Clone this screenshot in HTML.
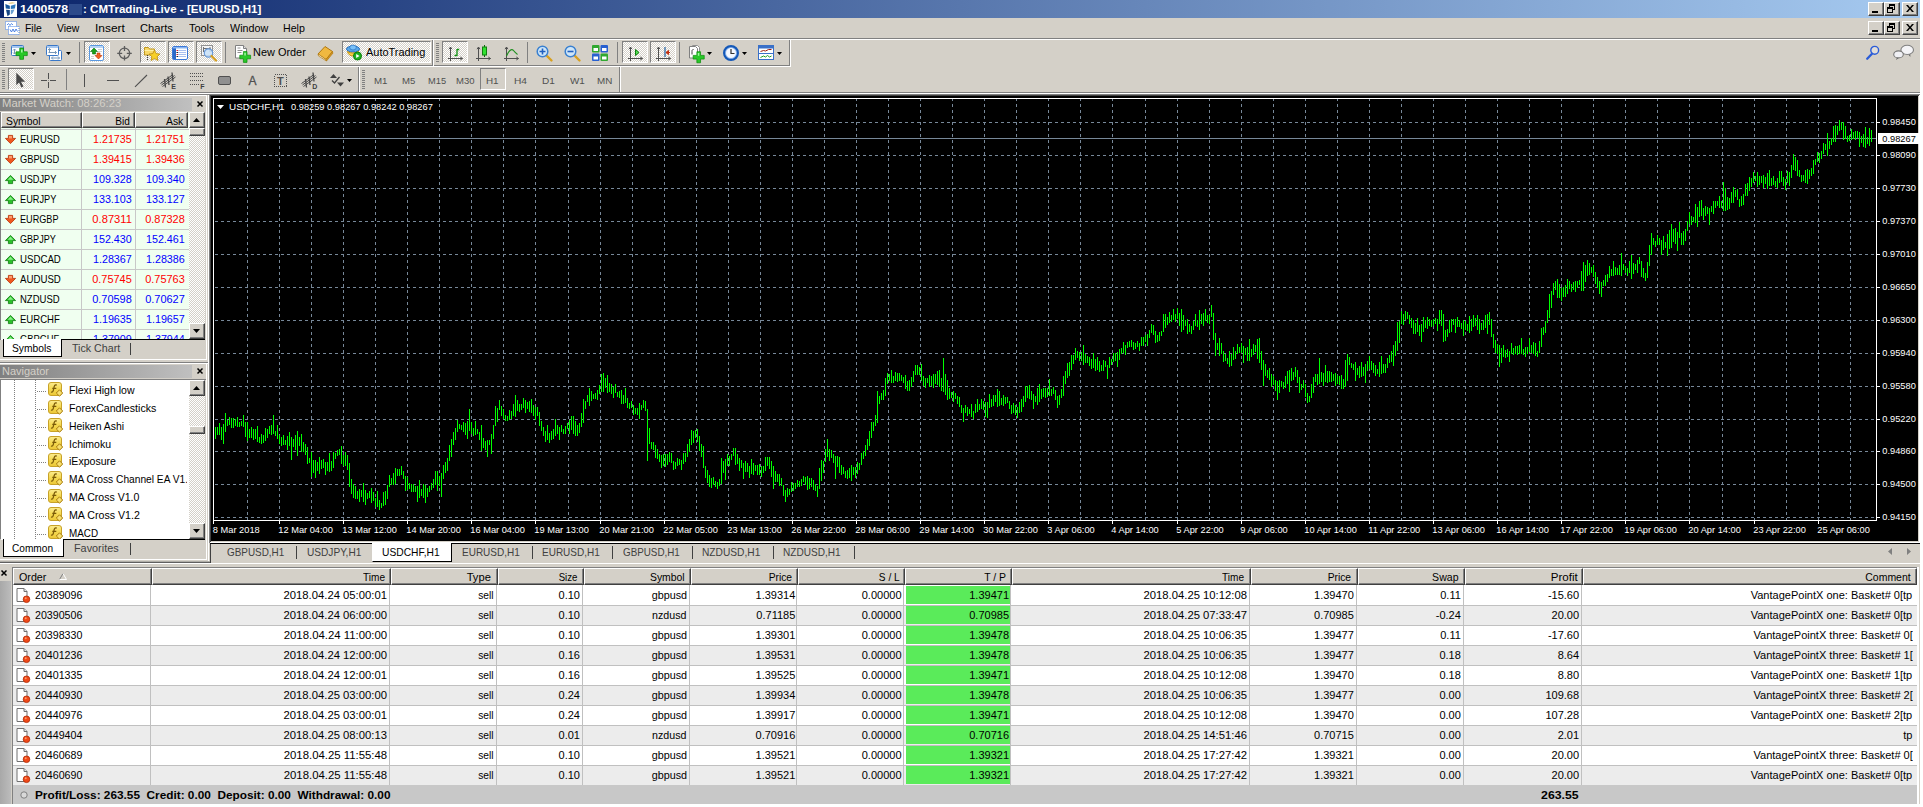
<!DOCTYPE html>
<html><head><meta charset="utf-8"><title>1400578 : CMTrading-Live - [EURUSD,H1]</title>
<style>
html,body{margin:0;padding:0;background:#fff;}
body{width:1923px;height:807px;overflow:hidden;position:relative;font-family:"Liberation Sans",sans-serif;font-size:11px;color:#000;}
#app{position:absolute;left:0;top:0;width:1920px;height:804px;background:#d4d0c8;overflow:hidden;}
#app div,#app span,#app svg{position:absolute;}
.t{white-space:pre;line-height:14px;height:14px;font-size:11px;}
.b{font-weight:bold;}
.s{white-space:pre;line-height:14px;height:14px;font-size:9.8px;}
.w{color:#fff;}
.g{color:#505050;}
.ic{overflow:visible;}
</style></head><body><div id="app">

<div style="left:0px;top:0px;width:1920px;height:18px;background:linear-gradient(90deg,#0a246a 0%,#a6caf0 100%);"></div>
<svg class="ic" style="left:4px;top:1px" width="13" height="16" viewBox="0 0 13 16"><rect x="0" y="0" width="13" height="16" fill="#fff"/><path d="M4 2.300Q8 0.800 11.500 2Q8 2.800 4 2.300z" fill="#d8a830"/><path d="M1.300 3l4.500 1.700v3.300l-4-0.600z" fill="#16569c"/><path d="M6.800 4.700l4.800-1.500-0.700 4.300-4.100 0.500z" fill="#2e78bc"/><path d="M2 8.800l3.800 0.300v4.500l-2.300 1.600z" fill="#144484"/><path d="M6.800 9.100l3.700-0.500-1.800 3.600-1.900 1.300z" fill="#6a9ed0"/></svg>
<span class="t b w" style="left:20.3px;top:2px;transform:scaleX(1.1208);transform-origin:left center;">1400578</span>
<span class="t" style="left:69px;top:2px;background:#2c4a8a;width:13px;height:11px;top:4px;">     </span>
<span class="t b w" style="left:83px;top:2px;transform:scaleX(1.0495);transform-origin:left center;">: CMTrading-Live - [EURUSD,H1]</span>
<div style="left:1868px;top:2px;width:16px;height:14px;box-sizing:border-box;background:#d4d0c8;border:1px solid;border-color:#fff #404040 #404040 #fff;box-shadow:inset -1px -1px 0 #808080;"></div>
<div style="left:1872px;top:11px;width:6px;height:2px;background:#000;"></div>
<div style="left:1884px;top:2px;width:16px;height:14px;box-sizing:border-box;background:#d4d0c8;border:1px solid;border-color:#fff #404040 #404040 #fff;box-shadow:inset -1px -1px 0 #808080;"></div>
<svg class="ic" style="left:1887px;top:4px" width="10" height="10" viewBox="0 0 10 10" shape-rendering="crispEdges"><path d="M2 0h6v2H2zM2 2h1v2H2zM7 2h1v4H7zM6 5h1v1H6zM0 3h6v2H0zM0 5h1v4H0zM5 5h1v4H5zM0 8h6v1H0z" fill="#000"/></svg>
<div style="left:1902px;top:2px;width:16px;height:14px;box-sizing:border-box;background:#d4d0c8;border:1px solid;border-color:#fff #404040 #404040 #fff;box-shadow:inset -1px -1px 0 #808080;"></div>
<svg class="ic" style="left:1906px;top:5px" width="8" height="7" viewBox="0 0 8 7"><path d="M0 0h2l2 2.5L6 0h2L5 3.5 8 7H6L4 4.5 2 7H0l3-3.5z" fill="#000"/></svg>
<div style="left:1868px;top:21px;width:16px;height:14px;box-sizing:border-box;background:#d4d0c8;border:1px solid;border-color:#fff #404040 #404040 #fff;box-shadow:inset -1px -1px 0 #808080;"></div>
<div style="left:1872px;top:30px;width:6px;height:2px;background:#000;"></div>
<div style="left:1884px;top:21px;width:16px;height:14px;box-sizing:border-box;background:#d4d0c8;border:1px solid;border-color:#fff #404040 #404040 #fff;box-shadow:inset -1px -1px 0 #808080;"></div>
<svg class="ic" style="left:1887px;top:23px" width="10" height="10" viewBox="0 0 10 10" shape-rendering="crispEdges"><path d="M2 0h6v2H2zM2 2h1v2H2zM7 2h1v4H7zM6 5h1v1H6zM0 3h6v2H0zM0 5h1v4H0zM5 5h1v4H5zM0 8h6v1H0z" fill="#000"/></svg>
<div style="left:1902px;top:21px;width:16px;height:14px;box-sizing:border-box;background:#d4d0c8;border:1px solid;border-color:#fff #404040 #404040 #fff;box-shadow:inset -1px -1px 0 #808080;"></div>
<svg class="ic" style="left:1906px;top:24px" width="8" height="7" viewBox="0 0 8 7"><path d="M0 0h2l2 2.5L6 0h2L5 3.5 8 7H6L4 4.5 2 7H0l3-3.5z" fill="#000"/></svg>
<svg class="ic" style="left:5px;top:21px" width="15" height="15" viewBox="0 0 15 15"><rect x="0.5" y="0.5" width="11" height="8" fill="#fff" stroke="#4a84e8" stroke-dasharray="1 1"/><path d="M2 4l1.500-1.500 1.500 2 1.500-2 1.500 1.500" stroke="#4a84e8" fill="none" stroke-width="0.9"/><rect x="3.500" y="5.500" width="10.500" height="8" fill="#fff" stroke="#4a84e8" stroke-dasharray="1 1"/><path d="M5 8.500l1.500 2.500 1.500-3 1.500 3 1.500-3 1.500 2.500" stroke="#3a74e0" fill="none" stroke-width="0.9"/></svg>
<span class="t" style="left:24.7px;top:21px;transform:scaleX(0.9478);transform-origin:left center;">File</span>
<span class="t" style="left:57.3px;top:21px;transform:scaleX(0.9431);transform-origin:left center;">View</span>
<span class="t" style="left:95.3px;top:21px;transform:scaleX(1.0868);transform-origin:left center;">Insert</span>
<span class="t" style="left:140.3px;top:21px;transform:scaleX(1.0155);transform-origin:left center;">Charts</span>
<span class="t" style="left:188.5px;top:21px;transform:scaleX(0.9930);transform-origin:left center;">Tools</span>
<span class="t" style="left:229.8px;top:21px;transform:scaleX(0.9764);transform-origin:left center;">Window</span>
<span class="t" style="left:283.4px;top:21px;transform:scaleX(0.9680);transform-origin:left center;">Help</span>
<div style="left:0px;top:38px;width:1920px;height:1px;background:#808080;"></div>
<div style="left:0px;top:39px;width:1920px;height:1px;background:#fff;"></div>
<div style="left:0px;top:65px;width:790px;height:1px;background:#808080;"></div>
<div style="left:0px;top:66px;width:791px;height:1px;background:#fff;"></div>
<div style="left:432px;top:40px;width:1px;height:25px;background:#808080;"></div>
<div style="left:433px;top:40px;width:1px;height:26px;background:#fff;"></div>
<div style="left:789px;top:40px;width:1px;height:26px;background:#808080;"></div>
<div style="left:790px;top:40px;width:1px;height:27px;background:#fff;"></div>
<div style="left:2px;top:43px;width:3px;height:20px;background:repeating-linear-gradient(#808080 0 1px,transparent 1px 2px);"></div>
<svg class="ic" style="left:11px;top:44px" width="16" height="16" viewBox="0 0 16 16"><rect x="0.5" y="1.5" width="12" height="10" rx="1" fill="#fff" stroke="#3a78c8"/><path d="M1 2h11v2H1z" fill="#a8c8f0"/><path d="M3.5 5v5M2 6.5l1.5-1.5L5 6.5M2 8.5L3.5 10 5 8.5" stroke="#7898b8" fill="none"/><path d="M9 4h4v4h4v4h-4v4H9v-4H5V8h4z" fill="#28c828" stroke="#0c8c0c" stroke-width="0.8" transform="translate(0.3,0.3) scale(0.94)"/><path d="M10 5.5h1.6v3H10z" fill="#a0f8a0"/></svg>
<svg class="ic" style="left:31px;top:52px" width="5" height="3" viewBox="0 0 5 3"><path d="M0 0h5L2.5 3z" fill="#000"/></svg>
<svg class="ic" style="left:46px;top:45px" width="16" height="16" viewBox="0 0 16 16"><rect x="3.5" y="5.5" width="12" height="10" rx="1" fill="#fff" stroke="#3a78c8"/><rect x="0.5" y="0.5" width="12" height="10" rx="1" fill="#fff" stroke="#3a78c8"/><path d="M1 1h11v2H1z" fill="#a8c8f0"/><path d="M3.5 3.5v4.5M2.5 7.5h8M9 6l1.5 1.5L9 9M2 5l1.5-1.5L5 5" stroke="#7898b8" fill="none"/><path d="M5.5 13h8M7 11.5L5.500 13 7 14.500M12 11.500l1.500 1.500-1.500 1.500" stroke="#7898b8" fill="none"/></svg>
<svg class="ic" style="left:66px;top:52px" width="5" height="3" viewBox="0 0 5 3"><path d="M0 0h5L2.5 3z" fill="#000"/></svg>
<div style="left:79px;top:42px;width:1px;height:21px;background:#808080;"></div>
<div style="left:84px;top:41px;width:26px;height:22px;background:repeating-conic-gradient(#fff 0% 25%,#d4d0c8 0% 50%) 0 0/2px 2px;border:1px solid;border-color:#808080 #fff #fff #808080;box-sizing:border-box;"></div>
<svg class="ic" style="left:89px;top:45px" width="16" height="16" viewBox="0 0 16 16"><rect x="0.5" y="0.5" width="14" height="15" rx="1.5" fill="#fff" stroke="#5a98e0"/><path d="M1 1h13v2H1z" fill="#b8d4f4"/><path d="M5 3l3.5 3.500h-2V9h-3V6.500h-2z" fill="#18a018" stroke="#0a700a" stroke-width="0.6"/><path d="M9.500 14L6 10.500h2V8h3v2.500h2z" fill="#f06020" stroke="#c03000" stroke-width="0.6"/><path d="M9 4.500h4M9 6.500h4M2 11.500h3M2 13.500h3" stroke="#d0d0d0"/></svg>
<div style="left:140px;top:41px;width:26px;height:22px;background:repeating-conic-gradient(#fff 0% 25%,#d4d0c8 0% 50%) 0 0/2px 2px;border:1px solid;border-color:#808080 #fff #fff #808080;box-sizing:border-box;"></div>
<svg class="ic" style="left:144px;top:45px" width="16" height="16" viewBox="0 0 16 16"><path d="M0.500 2.500h4l1 1.500h5v6h-10z" fill="#f8d868" stroke="#c09820"/><path d="M0.500 5.500h10" stroke="#fff0a0"/><path d="M10.500 5l1.700 3.600 3.800 0.500-2.800 2.600 0.700 3.800-3.400-1.900-3.400 1.900 0.700-3.800L5 9.100l3.800-0.500z" fill="#f8d028" stroke="#b88a10" stroke-width="0.8"/><path d="M3.500 10v5" stroke="#404040" stroke-dasharray="1 1"/></svg>
<div style="left:168px;top:41px;width:26px;height:22px;background:repeating-conic-gradient(#fff 0% 25%,#d4d0c8 0% 50%) 0 0/2px 2px;border:1px solid;border-color:#808080 #fff #fff #808080;box-sizing:border-box;"></div>
<svg class="ic" style="left:172px;top:45px" width="16" height="16" viewBox="0 0 16 16"><rect x="0.500" y="1.500" width="15" height="13" rx="1.500" fill="#fff" stroke="#3a78d8"/><path d="M1 2h3v12H1z" fill="#2a68c8"/><path d="M1 2h14v1.500H1z" fill="#88b4f0"/><path d="M6 5.500h8M6 7.500h8M6 9.500h8M6 11.500h8" stroke="#a8c0f0"/><path d="M4.500 5h1.500v1H4.500zM4.500 9h1.500v1H4.500z" fill="#e02020"/><path d="M4.500 7h1.500v1H4.500zM4.500 11h1.500v1H4.500z" fill="#202020"/></svg>
<div style="left:196px;top:41px;width:26px;height:22px;background:repeating-conic-gradient(#fff 0% 25%,#d4d0c8 0% 50%) 0 0/2px 2px;border:1px solid;border-color:#808080 #fff #fff #808080;box-sizing:border-box;"></div>
<svg class="ic" style="left:201px;top:45px" width="16" height="16" viewBox="0 0 16 16"><rect x="0.500" y="0.500" width="11" height="10" fill="#f4f4f4" stroke="#909090"/><path d="M2.500 2v5M9 2v5M2.500 3.500h7" stroke="#707070"/><circle cx="7.500" cy="8" r="4.200" fill="#c8e0f8" fill-opacity="0.850" stroke="#6a9ad8" stroke-width="1.200"/><path d="M10.500 11l4.500 4.500" stroke="#d8a020" stroke-width="2.200" stroke-linecap="round"/></svg>
<svg class="ic" style="left:117px;top:45px" width="16" height="16" viewBox="0 0 16 16"><circle cx="7.5" cy="8.3" r="5.2" fill="none" stroke="#5c5c5c" stroke-width="1.300"/><path d="M7.5 1V6M7.5 10.600v5M0.200 8.300H5.200M9.800 8.300h5" stroke="#5c5c5c" stroke-width="1.300"/></svg>
<div style="left:225px;top:42px;width:1px;height:21px;background:#808080;"></div>
<svg class="ic" style="left:235px;top:44px" width="16" height="16" viewBox="0 0 16 16"><path d="M0.500 1.500h8l3 3v9.500h-11z" fill="#fff" stroke="#808080"/><path d="M8.500 1.500v3h3" fill="#e0e0e0" stroke="#808080"/><path d="M2.500 4h3M2.500 6.500h5M2.500 8.500h4" stroke="#909090"/><path d="M8 6h4v4h4v4h-4v4H8v-4H4v-4h4z" fill="#28c828" stroke="#0c8c0c" stroke-width="0.8" transform="translate(1.2,2.200) scale(0.9)"/><path d="M9.300 8.800h1.500v2.800H9.300z" fill="#a0f8a0"/></svg>
<span class="t" style="left:253px;top:45px;transform:scaleX(0.9928);transform-origin:left center;">New Order</span>
<svg class="ic" style="left:317px;top:45px" width="16" height="16" viewBox="0 0 16 16"><path d="M1 9L8 1.500l7.500 5L9 14.500z" fill="#f0b840" stroke="#b07810"/><path d="M1 9l0.500 2L9.500 16l-0.500-1.500z" fill="#fff8e0" stroke="#b07810" stroke-width="0.700"/><path d="M9 14.500l6.500-8 0.300 1.800L9.500 16z" fill="#d89820" stroke="#b07810" stroke-width="0.700"/></svg>
<div style="left:342px;top:41px;width:89px;height:22px;background:repeating-conic-gradient(#fff 0% 25%,#d4d0c8 0% 50%) 0 0/2px 2px;border:1px solid;border-color:#808080 #fff #fff #808080;box-sizing:border-box;"></div>
<svg class="ic" style="left:346px;top:44px" width="16" height="16" viewBox="0 0 16 16"><ellipse cx="7" cy="5" rx="6.500" ry="3" fill="#58a8e8" stroke="#2870c0"/><ellipse cx="7" cy="3.500" rx="3.300" ry="2.500" fill="#78c0f8" stroke="#2870c0" stroke-width="0.700"/><path d="M1.500 7.500c1 6 10 6 11 0c-3 2-8 2-11 0z" fill="#f8d048" stroke="#c09010"/><circle cx="11.500" cy="12" r="4" fill="#20b020" stroke="#0a800a"/><path d="M10.200 10l3.300 2-3.300 2z" fill="#fff"/></svg>
<span class="t" style="left:365.7px;top:45px;transform:scaleX(0.9963);transform-origin:left center;">AutoTrading</span>
<div style="left:436px;top:43px;width:3px;height:20px;background:repeating-linear-gradient(#808080 0 1px,transparent 1px 2px);"></div>
<div style="left:442px;top:41px;width:26px;height:22px;background:repeating-conic-gradient(#fff 0% 25%,#d4d0c8 0% 50%) 0 0/2px 2px;border:1px solid;border-color:#808080 #fff #fff #808080;box-sizing:border-box;"></div>
<svg class="ic" style="left:447px;top:45px" width="16" height="16" viewBox="0 0 16 16"><path d="M3.500 2v14M1 13.500h14.500M2 4.200l1.500-2.200 1.500 2.200M13.300 12l2.200 1.500-2.200 1.500" stroke="#505050" fill="none"/><path d="M10 4v7M10 4.500h2.200M7.500 10.500h2.500" stroke="#109010" stroke-width="1.300" fill="none"/></svg>
<svg class="ic" style="left:475px;top:45px" width="16" height="16" viewBox="0 0 16 16"><path d="M3.500 2v14M1 13.500h14.500M2 4.200l1.500-2.200 1.500 2.200M13.300 12l2.200 1.500-2.200 1.500" stroke="#505050" fill="none"/><path d="M9.500 0v12" stroke="#106010"/><rect x="7.500" y="2" width="4" height="8" fill="#30e030" stroke="#108010"/></svg>
<svg class="ic" style="left:503px;top:45px" width="16" height="16" viewBox="0 0 16 16"><path d="M3.500 2v14M1 13.500h14.500M2 4.200l1.500-2.200 1.500 2.200M13.300 12l2.200 1.500-2.200 1.500" stroke="#505050" fill="none"/><path d="M3.500 11c2-5 5-8 7-5.500s3 3 4 4" stroke="#209020" stroke-width="1.200" fill="none"/></svg>
<div style="left:527px;top:42px;width:1px;height:21px;background:#808080;"></div>
<svg class="ic" style="left:536px;top:45px" width="16" height="16" viewBox="0 0 16 16"><path d="M10.500 10.500l5 5" stroke="#d8a020" stroke-width="2.400" stroke-linecap="round"/><circle cx="6.500" cy="6.500" r="5.300" fill="#cfe6f8" stroke="#3a80d0" stroke-width="1.500"/><path d="M3.500 6.500h6M6.500 3.500v6" stroke="#2060c0" stroke-width="1.600"/></svg>
<svg class="ic" style="left:564px;top:45px" width="16" height="16" viewBox="0 0 16 16"><path d="M10.500 10.500l5 5" stroke="#d8a020" stroke-width="2.400" stroke-linecap="round"/><circle cx="6.500" cy="6.500" r="5.300" fill="#cfe6f8" stroke="#3a80d0" stroke-width="1.500"/><path d="M3.500 6.500h6" stroke="#2060c0" stroke-width="1.600"/></svg>
<svg class="ic" style="left:592px;top:45px" width="16" height="16" viewBox="0 0 16 16"><rect x="0" y="0" width="7.500" height="7.500" rx="1" fill="#30a830"/><rect x="8.500" y="0" width="7.500" height="7.500" rx="1" fill="#2860d0"/><rect x="0" y="8.500" width="7.500" height="7.500" rx="1" fill="#2860d0"/><rect x="8.500" y="8.500" width="7.500" height="7.500" rx="1" fill="#30a830"/><path d="M1.500 3h4.500v3H1.500zM10 3h4.500v3H10zM1.500 11.500h4.500v3H1.500zM10 11.500h4.500v3H10z" fill="#fff"/></svg>
<div style="left:617px;top:42px;width:1px;height:21px;background:#808080;"></div>
<div style="left:622px;top:41px;width:26px;height:22px;background:repeating-conic-gradient(#fff 0% 25%,#d4d0c8 0% 50%) 0 0/2px 2px;border:1px solid;border-color:#808080 #fff #fff #808080;box-sizing:border-box;"></div>
<svg class="ic" style="left:627px;top:45px" width="16" height="16" viewBox="0 0 16 16"><path d="M3.500 2v14M1 13.500h14.500M2 4.200l1.500-2.200 1.500 2.200M13.300 12l2.200 1.500-2.200 1.500" stroke="#505050" fill="none"/><path d="M8.500 4.500l3.500 3-3.500 3z" fill="#50e050" stroke="#108010"/></svg>
<div style="left:650px;top:41px;width:26px;height:22px;background:repeating-conic-gradient(#fff 0% 25%,#d4d0c8 0% 50%) 0 0/2px 2px;border:1px solid;border-color:#808080 #fff #fff #808080;box-sizing:border-box;"></div>
<svg class="ic" style="left:655px;top:45px" width="16" height="16" viewBox="0 0 16 16"><path d="M3.500 2v14M1 13.500h14.500M2 4.200l1.500-2.200 1.500 2.200M13.300 12l2.200 1.500-2.200 1.500" stroke="#505050" fill="none"/><path d="M10 2v10" stroke="#2060a0" stroke-width="1.200"/><path d="M15 7.500h-4M13.500 5.500l-2.500 2 2.500 2z" stroke="#c03010" stroke-width="1" fill="#e04010"/></svg>
<div style="left:679px;top:42px;width:1px;height:21px;background:#808080;"></div>
<svg class="ic" style="left:689px;top:44px" width="16" height="16" viewBox="0 0 16 16"><path d="M3.500 1.500h5l2 2v9h-7z" fill="#fff" stroke="#909090"/><path d="M0.500 2.500h6l2 2v9.500h-8z" fill="#fff" stroke="#808080"/><path d="M4.500 5.500c-1.500 0-1.500 1-1.500 2v3" stroke="#404040" fill="none"/><path d="M8 6h4v4h4v4h-4v4H8v-4H4v-4h4z" fill="#28c828" stroke="#0c8c0c" stroke-width="0.8" transform="translate(0.500,2.200) scale(0.92)"/><path d="M8.800 9h1.500v2.800H8.800z" fill="#a0f8a0"/></svg>
<svg class="ic" style="left:707px;top:52px" width="5" height="3" viewBox="0 0 5 3"><path d="M0 0h5L2.5 3z" fill="#000"/></svg>
<svg class="ic" style="left:723px;top:45px" width="16" height="16" viewBox="0 0 16 16"><circle cx="8" cy="8" r="6.800" fill="#f4f8ff" stroke="#1458b8" stroke-width="2.400"/><circle cx="8" cy="8" r="5.500" fill="none" stroke="#78a8e8" stroke-width="0.800"/><path d="M8 4v4.500h3.500" stroke="#303030" stroke-width="1.200" fill="none"/></svg>
<svg class="ic" style="left:742px;top:52px" width="5" height="3" viewBox="0 0 5 3"><path d="M0 0h5L2.5 3z" fill="#000"/></svg>
<svg class="ic" style="left:758px;top:45px" width="16" height="16" viewBox="0 0 16 16"><rect x="0.500" y="0.500" width="15" height="14" fill="#fff" stroke="#3a70c8"/><path d="M1 1h14v2.500H1z" fill="#3a70c8"/><path d="M1 8.500h14" stroke="#3a70c8"/><path d="M2.500 6.500l3-1 2 0.500 3-1.500h3" stroke="#a02010" fill="none"/><path d="M2.500 12.500l3-1.500 2 1 2-1.500 2 1.500 2-1" stroke="#20a020" fill="none"/></svg>
<svg class="ic" style="left:777px;top:52px" width="5" height="3" viewBox="0 0 5 3"><path d="M0 0h5L2.5 3z" fill="#000"/></svg>
<svg class="ic" style="left:1865px;top:45px" width="16" height="16" viewBox="0 0 16 16"><path d="M7 8.700l-4.800 5" stroke="#2a5cd8" stroke-width="2.300" stroke-linecap="round"/><circle cx="9.700" cy="5.300" r="3.900" fill="#e2ded8" stroke="#2a5cd8" stroke-width="1.400"/></svg>
<svg class="ic" style="left:1894px;top:44px" width="16" height="16" viewBox="0 0 16 16"><path d="M13.800 9.800l2.600 3.200-0.200-4z" fill="#606060"/><ellipse cx="13.200" cy="5.900" rx="6.300" ry="4.600" fill="#f4f4f7" stroke="#808080" stroke-width="1.100"/><path d="M3.200 13l-1.200 3 3.400-2.400z" fill="#606060"/><ellipse cx="4.500" cy="10.400" rx="4.800" ry="3.500" fill="#f0f0f4" stroke="#787878" stroke-width="1.100"/></svg>
<div style="left:358px;top:67px;width:1px;height:26px;background:#808080;"></div>
<div style="left:359px;top:67px;width:1px;height:26px;background:#fff;"></div>
<div style="left:619px;top:67px;width:1px;height:26px;background:#808080;"></div>
<div style="left:620px;top:67px;width:1px;height:26px;background:#fff;"></div>
<div style="left:2px;top:70px;width:3px;height:20px;background:repeating-linear-gradient(#808080 0 1px,transparent 1px 2px);"></div>
<div style="left:8px;top:68px;width:26px;height:22px;background:repeating-conic-gradient(#fff 0% 25%,#d4d0c8 0% 50%) 0 0/2px 2px;border:1px solid;border-color:#808080 #fff #fff #808080;box-sizing:border-box;"></div>
<svg class="ic" style="left:13px;top:72px" width="16" height="16" viewBox="0 0 16 16"><path d="M3.300 0.800v12.500l2.800-2.800 2.300 5 2-1-2.300-4.800h4z" fill="#484848"/></svg>
<svg class="ic" style="left:40px;top:72px" width="16" height="16" viewBox="0 0 16 16"><path d="M8.5 1v6M8.5 10v6M1 8.5h6M10 8.5h6" stroke="#505050" stroke-width="1" shape-rendering="crispEdges"/><path d="M8.5 8v1" stroke="#909090" shape-rendering="crispEdges"/></svg>
<div style="left:66px;top:69px;width:1px;height:21px;background:#808080;"></div>
<svg class="ic" style="left:77px;top:72px" width="16" height="16" viewBox="0 0 16 16"><path d="M7.500 2v13" stroke="#505050" stroke-width="1" shape-rendering="crispEdges"/></svg>
<svg class="ic" style="left:105px;top:72px" width="16" height="16" viewBox="0 0 16 16"><path d="M2 8.500h12" stroke="#505050" stroke-width="1" shape-rendering="crispEdges"/></svg>
<svg class="ic" style="left:133px;top:72px" width="16" height="16" viewBox="0 0 16 16"><path d="M2 14.800L14 3" stroke="#505050" stroke-width="1.100"/></svg>
<svg class="ic" style="left:160px;top:72px" width="16" height="16" viewBox="0 0 16 16"><path d="M0.500 11.500L13 2.500M2.500 14.500L15.500 5M1.500 13L14.500 3.500" stroke="#484848" stroke-width="1" fill="none"/><path d="M4.500 7l1 8.500M8 4.500l1 8.500M12 0.500l1 9" stroke="#484848" stroke-width="1.300" fill="none"/><text x="11.300" y="16.800" font-size="7" font-weight="bold" font-family="Liberation Sans, sans-serif" fill="#404040">E</text></svg>
<svg class="ic" style="left:189px;top:72px" width="16" height="16" viewBox="0 0 16 16"><path d="M1 1.500h13M1 4.500h13M1 8.500h13M1 12.500h10" stroke="#505050" stroke-dasharray="1 1" shape-rendering="crispEdges"/><text x="11.300" y="16.800" font-size="7" font-weight="bold" font-family="Liberation Sans, sans-serif" fill="#404040">F</text></svg>
<svg class="ic" style="left:217px;top:72px" width="16" height="16" viewBox="0 0 16 16"><rect x="1.500" y="4.500" width="12" height="8" rx="1.500" fill="#909090" stroke="#505050"/></svg>
<svg class="ic" style="left:245px;top:72px" width="16" height="16" viewBox="0 0 16 16"><text x="3.500" y="13" font-size="12" font-family="Liberation Sans, sans-serif" fill="#505050" stroke="#505050" stroke-width="0.300">A</text></svg>
<svg class="ic" style="left:273px;top:72px" width="16" height="16" viewBox="0 0 16 16"><rect x="1.500" y="2.500" width="12" height="12" fill="none" stroke="#505050" stroke-dasharray="1 1" shape-rendering="crispEdges"/><text x="4" y="13" font-size="11" font-weight="bold" font-family="Liberation Sans, sans-serif" fill="#505050">T</text></svg>
<svg class="ic" style="left:301px;top:72px" width="16" height="16" viewBox="0 0 16 16"><path d="M0.500 11.500L13 2.500M2.500 14.500L15.500 5M1.500 13L14.500 3.500" stroke="#484848" stroke-width="1" fill="none"/><path d="M4.500 7l1 8.500M8 4.500l1 8.500M12 0.500l1 9" stroke="#484848" stroke-width="1.300" fill="none"/><text x="11.300" y="16.800" font-size="7" font-weight="bold" font-family="Liberation Sans, sans-serif" fill="#404040">D</text></svg>
<svg class="ic" style="left:329px;top:72px" width="16" height="16" viewBox="0 0 16 16"><path d="M1 6l3.500-4 3.500 4z" fill="#404040"/><path d="M3 8.500l2.500 2.500 5-6" stroke="#404040" stroke-width="1.300" fill="none"/><path d="M8 10.500h7l-3.500 4z" fill="#404040"/></svg>
<svg class="ic" style="left:347px;top:79px" width="5" height="3" viewBox="0 0 5 3"><path d="M0 0h5L2.5 3z" fill="#000"/></svg>
<div style="left:362px;top:70px;width:3px;height:20px;background:repeating-linear-gradient(#808080 0 1px,transparent 1px 2px);"></div>
<span class="s g" style="left:373.5px;top:74.0px;transform:scaleX(0.9916);transform-origin:left center">M1</span>
<span class="s g" style="left:401.7px;top:74.0px;transform:scaleX(0.9769);transform-origin:left center">M5</span>
<span class="s g" style="left:427.7px;top:74.0px;transform:scaleX(0.9494);transform-origin:left center">M15</span>
<span class="s g" style="left:455.5px;top:74.0px;transform:scaleX(0.9704);transform-origin:left center">M30</span>
<div style="left:480px;top:68px;width:26px;height:22px;border:1px solid;border-color:#808080 #fff #fff #808080;box-sizing:border-box;"></div>
<span class="s g" style="left:486.4px;top:74.0px;transform:scaleX(1.0058);transform-origin:left center">H1</span>
<span class="s g" style="left:513.5px;top:74.0px;transform:scaleX(1.0377);transform-origin:left center">H4</span>
<span class="s g" style="left:542.2px;top:74.0px;transform:scaleX(1.0217);transform-origin:left center">D1</span>
<span class="s g" style="left:570.2px;top:74.0px;transform:scaleX(1.0068);transform-origin:left center">W1</span>
<span class="s g" style="left:596.7px;top:74.0px;transform:scaleX(1.0039);transform-origin:left center">MN</span>
<div style="left:0px;top:92px;width:1920px;height:1px;background:#808080;"></div>
<div style="left:0px;top:93px;width:1920px;height:1px;background:#fff;"></div>
<div style="left:0px;top:94px;width:1920px;height:1px;background:#808080;"></div>
<div style="left:0px;top:95px;width:207px;height:1px;background:#fff;"></div>
<div style="left:206px;top:95px;width:1px;height:265px;background:#fff;"></div>
<div style="left:0px;top:359px;width:207px;height:1px;background:#fff;"></div>
<div style="left:0px;top:362px;width:209px;height:1px;background:#808080;"></div>
<div style="left:0px;top:363px;width:209px;height:1px;background:#fff;"></div>
<div style="left:208px;top:95px;width:1px;height:468px;background:#fff;"></div>
<div style="left:0px;top:98px;width:192px;height:13px;background:linear-gradient(90deg,#808080,#c0c0c0);"></div>
<span class="t" style="left:2.2px;top:96px;transform:scaleX(1.0243);transform-origin:left center;color:#d4d0c8;">Market Watch: 08:26:23</span>
<svg class="ic" style="left:197px;top:101px" width="6" height="6" viewBox="0 0 6 6"><path d="M0.5 0.5l5 5M5.5 0.5l-5 5" stroke="#000" stroke-width="1.5"/></svg>
<div style="left:0px;top:112px;width:189px;height:228px;background:#f0fff0;overflow:hidden;"></div>
<div style="left:1px;top:112px;width:81px;height:16px;box-sizing:border-box;background:#d4d0c8;border:1px solid;border-color:#fff #404040 #404040 #fff;box-shadow:inset -1px -1px 0 #808080;"></div>
<div style="left:82px;top:112px;width:53px;height:16px;box-sizing:border-box;background:#d4d0c8;border:1px solid;border-color:#fff #404040 #404040 #fff;box-shadow:inset -1px -1px 0 #808080;"></div>
<div style="left:135px;top:112px;width:53px;height:16px;box-sizing:border-box;background:#d4d0c8;border:1px solid;border-color:#fff #404040 #404040 #fff;box-shadow:inset -1px -1px 0 #808080;"></div>
<span class="t" style="left:6px;top:114px;transform:scaleX(0.9405);transform-origin:left center;">Symbol</span>
<span class="t" style="right:1790px;top:114px;transform:scaleX(0.9183);transform-origin:right center;">Bid</span>
<span class="t" style="right:1736.8px;top:114px;transform:scaleX(0.9489);transform-origin:right center;">Ask</span>
<div style="left:0;top:0;width:1920px;height:804px;clip-path:inset(128px 1731px 465px 0px);">
<svg class="ic" style="left:5px;top:135px" width="11" height="9" viewBox="0 0 11 9"><path d="M5.500 8.600l5.100-5.200h-3v-3h-4.200v3h-3z" fill="#f05820" stroke="#b83004" stroke-width="0.800"/><path d="M4 1h3v2.400H4z" fill="#ffa070"/></svg>
<span class="t" style="left:20.3px;top:132px;transform:scaleX(0.8568);transform-origin:left center;">EURUSD</span>
<span class="t" style="right:1788.4px;top:132px;transform:scaleX(0.9758);transform-origin:right center;color:#ff0000;">1.21735</span>
<span class="t" style="right:1735.2px;top:132px;transform:scaleX(0.9758);transform-origin:right center;color:#ff0000;">1.21751</span>
<div style="left:0px;top:149px;width:189px;height:1px;background:#c8c8c8;"></div>
<svg class="ic" style="left:5px;top:155px" width="11" height="9" viewBox="0 0 11 9"><path d="M5.500 8.600l5.100-5.200h-3v-3h-4.200v3h-3z" fill="#f05820" stroke="#b83004" stroke-width="0.800"/><path d="M4 1h3v2.400H4z" fill="#ffa070"/></svg>
<span class="t" style="left:20.3px;top:152px;transform:scaleX(0.8438);transform-origin:left center;">GBPUSD</span>
<span class="t" style="right:1788.4px;top:152px;transform:scaleX(0.9758);transform-origin:right center;color:#ff0000;">1.39415</span>
<span class="t" style="right:1735.2px;top:152px;transform:scaleX(0.9758);transform-origin:right center;color:#ff0000;">1.39436</span>
<div style="left:0px;top:169px;width:189px;height:1px;background:#c8c8c8;"></div>
<svg class="ic" style="left:5px;top:175px" width="11" height="9" viewBox="0 0 11 9"><path d="M5.500 0.400l5.100 5.200h-3v3h-4.200v-3h-3z" fill="#2cc02c" stroke="#0c7c0c" stroke-width="0.800"/><path d="M5.500 1.800l2.800 2.900h-5.600z" fill="#8cf08c"/></svg>
<span class="t" style="left:20.3px;top:172px;transform:scaleX(0.8364);transform-origin:left center;">USDJPY</span>
<span class="t" style="right:1788.4px;top:172px;transform:scaleX(0.9758);transform-origin:right center;color:#0000ff;">109.328</span>
<span class="t" style="right:1735.2px;top:172px;transform:scaleX(0.9758);transform-origin:right center;color:#0000ff;">109.340</span>
<div style="left:0px;top:189px;width:189px;height:1px;background:#c8c8c8;"></div>
<svg class="ic" style="left:5px;top:195px" width="11" height="9" viewBox="0 0 11 9"><path d="M5.500 0.400l5.100 5.200h-3v3h-4.200v-3h-3z" fill="#2cc02c" stroke="#0c7c0c" stroke-width="0.800"/><path d="M5.500 1.800l2.800 2.900h-5.600z" fill="#8cf08c"/></svg>
<span class="t" style="left:20.3px;top:192px;transform:scaleX(0.8364);transform-origin:left center;">EURJPY</span>
<span class="t" style="right:1788.4px;top:192px;transform:scaleX(0.9758);transform-origin:right center;color:#0000ff;">133.103</span>
<span class="t" style="right:1735.2px;top:192px;transform:scaleX(0.9758);transform-origin:right center;color:#0000ff;">133.127</span>
<div style="left:0px;top:209px;width:189px;height:1px;background:#c8c8c8;"></div>
<svg class="ic" style="left:5px;top:215px" width="11" height="9" viewBox="0 0 11 9"><path d="M5.500 8.600l5.100-5.200h-3v-3h-4.200v3h-3z" fill="#f05820" stroke="#b83004" stroke-width="0.800"/><path d="M4 1h3v2.400H4z" fill="#ffa070"/></svg>
<span class="t" style="left:20.3px;top:212px;transform:scaleX(0.8287);transform-origin:left center;">EURGBP</span>
<span class="t" style="right:1788.4px;top:212px;transform:scaleX(1.0168);transform-origin:right center;color:#ff0000;">0.87311</span>
<span class="t" style="right:1735.2px;top:212px;transform:scaleX(0.9959);transform-origin:right center;color:#ff0000;">0.87328</span>
<div style="left:0px;top:229px;width:189px;height:1px;background:#c8c8c8;"></div>
<svg class="ic" style="left:5px;top:235px" width="11" height="9" viewBox="0 0 11 9"><path d="M5.500 0.400l5.100 5.200h-3v3h-4.200v-3h-3z" fill="#2cc02c" stroke="#0c7c0c" stroke-width="0.800"/><path d="M5.500 1.800l2.800 2.900h-5.600z" fill="#8cf08c"/></svg>
<span class="t" style="left:20.3px;top:232px;transform:scaleX(0.8248);transform-origin:left center;">GBPJPY</span>
<span class="t" style="right:1788.4px;top:232px;transform:scaleX(0.9758);transform-origin:right center;color:#0000ff;">152.430</span>
<span class="t" style="right:1735.2px;top:232px;transform:scaleX(0.9758);transform-origin:right center;color:#0000ff;">152.461</span>
<div style="left:0px;top:249px;width:189px;height:1px;background:#c8c8c8;"></div>
<svg class="ic" style="left:5px;top:255px" width="11" height="9" viewBox="0 0 11 9"><path d="M5.500 0.400l5.100 5.200h-3v3h-4.200v-3h-3z" fill="#2cc02c" stroke="#0c7c0c" stroke-width="0.800"/><path d="M5.500 1.800l2.800 2.900h-5.600z" fill="#8cf08c"/></svg>
<span class="t" style="left:20.3px;top:252px;transform:scaleX(0.8783);transform-origin:left center;">USDCAD</span>
<span class="t" style="right:1788.4px;top:252px;transform:scaleX(0.9758);transform-origin:right center;color:#0000ff;">1.28367</span>
<span class="t" style="right:1735.2px;top:252px;transform:scaleX(0.9758);transform-origin:right center;color:#0000ff;">1.28386</span>
<div style="left:0px;top:269px;width:189px;height:1px;background:#c8c8c8;"></div>
<svg class="ic" style="left:5px;top:275px" width="11" height="9" viewBox="0 0 11 9"><path d="M5.500 8.600l5.100-5.200h-3v-3h-4.200v3h-3z" fill="#f05820" stroke="#b83004" stroke-width="0.800"/><path d="M4 1h3v2.400H4z" fill="#ffa070"/></svg>
<span class="t" style="left:20.3px;top:272px;transform:scaleX(0.8783);transform-origin:left center;">AUDUSD</span>
<span class="t" style="right:1788.4px;top:272px;transform:scaleX(0.9959);transform-origin:right center;color:#ff0000;">0.75745</span>
<span class="t" style="right:1735.2px;top:272px;transform:scaleX(0.9959);transform-origin:right center;color:#ff0000;">0.75763</span>
<div style="left:0px;top:289px;width:189px;height:1px;background:#c8c8c8;"></div>
<svg class="ic" style="left:5px;top:295px" width="11" height="9" viewBox="0 0 11 9"><path d="M5.500 0.400l5.100 5.200h-3v3h-4.200v-3h-3z" fill="#2cc02c" stroke="#0c7c0c" stroke-width="0.800"/><path d="M5.500 1.800l2.800 2.900h-5.600z" fill="#8cf08c"/></svg>
<span class="t" style="left:20.3px;top:292px;transform:scaleX(0.8640);transform-origin:left center;">NZDUSD</span>
<span class="t" style="right:1788.4px;top:292px;transform:scaleX(0.9959);transform-origin:right center;color:#0000ff;">0.70598</span>
<span class="t" style="right:1735.2px;top:292px;transform:scaleX(0.9959);transform-origin:right center;color:#0000ff;">0.70627</span>
<div style="left:0px;top:309px;width:189px;height:1px;background:#c8c8c8;"></div>
<svg class="ic" style="left:5px;top:315px" width="11" height="9" viewBox="0 0 11 9"><path d="M5.500 0.400l5.100 5.200h-3v3h-4.200v-3h-3z" fill="#2cc02c" stroke="#0c7c0c" stroke-width="0.800"/><path d="M5.500 1.800l2.800 2.900h-5.600z" fill="#8cf08c"/></svg>
<span class="t" style="left:20.3px;top:312px;transform:scaleX(0.8684);transform-origin:left center;">EURCHF</span>
<span class="t" style="right:1788.4px;top:312px;transform:scaleX(0.9758);transform-origin:right center;color:#0000ff;">1.19635</span>
<span class="t" style="right:1735.2px;top:312px;transform:scaleX(0.9758);transform-origin:right center;color:#0000ff;">1.19657</span>
<div style="left:0px;top:329px;width:189px;height:1px;background:#c8c8c8;"></div>
<svg class="ic" style="left:5px;top:335px" width="11" height="9" viewBox="0 0 11 9"><path d="M5.500 0.400l5.100 5.200h-3v3h-4.200v-3h-3z" fill="#2cc02c" stroke="#0c7c0c" stroke-width="0.800"/><path d="M5.500 1.800l2.800 2.900h-5.600z" fill="#8cf08c"/></svg>
<span class="t" style="left:20.3px;top:332px;transform:scaleX(0.8552);transform-origin:left center;">GBPCHF</span>
<span class="t" style="right:1788.4px;top:332px;transform:scaleX(0.9758);transform-origin:right center;color:#0000ff;">1.37909</span>
<span class="t" style="right:1735.2px;top:332px;transform:scaleX(0.9758);transform-origin:right center;color:#0000ff;">1.37944</span>
<div style="left:0px;top:349px;width:189px;height:1px;background:#c8c8c8;"></div>
<div style="left:0px;top:129px;width:189px;height:1px;background:#c8c8c8;"></div>
<div style="left:81px;top:128px;width:1px;height:211px;background:#c8c8c8;"></div>
<div style="left:135px;top:128px;width:1px;height:211px;background:#c8c8c8;"></div>
</div>
<div style="left:0px;top:112px;width:1px;height:228px;background:#808080;"></div>
<div style="left:189px;top:112px;width:16px;height:227px;background:repeating-conic-gradient(#fff 0% 25%,#d4d0c8 0% 50%) 0 0/2px 2px;"></div>
<div style="left:189px;top:112px;width:16px;height:16px;box-sizing:border-box;background:#d4d0c8;border:1px solid;border-color:#fff #404040 #404040 #fff;box-shadow:inset -1px -1px 0 #808080;"></div>
<svg class="ic" style="left:193px;top:118px" width="7" height="4" viewBox="0 0 7 4"><path d="M0 4h7L3.5 0z" fill="#000"/></svg>
<div style="left:189px;top:323px;width:16px;height:16px;box-sizing:border-box;background:#d4d0c8;border:1px solid;border-color:#fff #404040 #404040 #fff;box-shadow:inset -1px -1px 0 #808080;"></div>
<svg class="ic" style="left:193px;top:329px" width="7" height="4" viewBox="0 0 7 4"><path d="M0 0h7L3.5 4z" fill="#000"/></svg>
<div style="left:189px;top:128px;width:16px;height:8px;box-sizing:border-box;background:#d4d0c8;border:1px solid;border-color:#fff #404040 #404040 #fff;box-shadow:inset -1px -1px 0 #808080;"></div>
<div style="left:62px;top:339px;width:143px;height:1px;background:#000;"></div>
<div style="left:1px;top:339px;width:61px;height:1px;background:#fff;"></div>
<div style="left:3px;top:339px;width:59px;height:18px;box-sizing:border-box;background:#fff;border:1px solid #000;border-top:none;"></div>
<span class="t" style="left:12.2px;top:341px;transform:scaleX(0.9317);transform-origin:left center;">Symbols</span>
<span class="t" style="left:72px;top:341px;transform:scaleX(0.9696);transform-origin:left center;color:#404040;">Tick Chart</span>
<div style="left:130px;top:343px;width:1px;height:12px;background:#404040;"></div>
<div style="left:206px;top:364px;width:1px;height:196px;background:#fff;"></div>
<div style="left:0px;top:559px;width:207px;height:1px;background:#fff;"></div>
<div style="left:0px;top:561px;width:210px;height:1px;background:#b0aea8;"></div>
<div style="left:0px;top:562px;width:210px;height:1px;background:#606060;"></div>
<div style="left:0px;top:379px;width:206px;height:1px;background:#808080;"></div>
<div style="left:0px;top:365px;width:192px;height:13px;background:linear-gradient(90deg,#808080,#c0c0c0);"></div>
<span class="t" style="left:2.2px;top:364px;transform:scaleX(0.9983);transform-origin:left center;color:#d4d0c8;">Navigator</span>
<svg class="ic" style="left:197px;top:368px" width="6" height="6" viewBox="0 0 6 6"><path d="M0.5 0.5l5 5M5.5 0.5l-5 5" stroke="#000" stroke-width="1.5"/></svg>
<div style="left:0px;top:380px;width:189px;height:159px;background:#fff;overflow:hidden;"></div>
<div style="left:0px;top:380px;width:1px;height:159px;background:#808080;"></div>
<div style="left:14px;top:380px;width:1px;height:159px;background:repeating-linear-gradient(#808080 0 1px,transparent 1px 2px);"></div>
<div style="left:35px;top:380px;width:1px;height:159px;background:repeating-linear-gradient(#808080 0 1px,transparent 1px 2px);"></div>
<div style="left:0;top:0;width:1920px;height:804px;clip-path:inset(380px 1733px 265px 0px);">
<div style="left:37px;top:391px;width:10px;height:1px;background:repeating-linear-gradient(90deg,#808080 0 1px,transparent 1px 2px);"></div>
<svg class="ic" style="left:48px;top:382px" width="15" height="15" viewBox="0 0 15 15"><defs><linearGradient id="gfx" x1="0" y1="0" x2="0" y2="1"><stop offset="0" stop-color="#fcec90"/><stop offset="0.5" stop-color="#f4d850"/><stop offset="1" stop-color="#ecc838"/></linearGradient></defs><rect x="0.500" y="0.500" width="13" height="13" rx="2.500" fill="url(#gfx)" stroke="#c8a228"/><path d="M8.800 3.200c-2.200-0.800-2.600 0.600-3.100 3.400s-0.900 3.800-2.700 3.400M4.300 6.300h4" stroke="#7a5a08" stroke-width="1.250" fill="none"/><path d="M11.500 7.800l3.200 3.200-3.200 3.200-3.200-3.200z" fill="#f8e070" stroke="#a87c10" stroke-width="1"/></svg>
<span class="t" style="left:69px;top:383px;transform:scaleX(0.9567);transform-origin:left center;">Flexi High low</span>
<div style="left:37px;top:409px;width:10px;height:1px;background:repeating-linear-gradient(90deg,#808080 0 1px,transparent 1px 2px);"></div>
<svg class="ic" style="left:48px;top:400px" width="15" height="15" viewBox="0 0 15 15"><defs><linearGradient id="gfx" x1="0" y1="0" x2="0" y2="1"><stop offset="0" stop-color="#fcec90"/><stop offset="0.5" stop-color="#f4d850"/><stop offset="1" stop-color="#ecc838"/></linearGradient></defs><rect x="0.500" y="0.500" width="13" height="13" rx="2.500" fill="url(#gfx)" stroke="#c8a228"/><path d="M8.800 3.200c-2.200-0.800-2.600 0.600-3.100 3.400s-0.900 3.800-2.700 3.400M4.300 6.300h4" stroke="#7a5a08" stroke-width="1.250" fill="none"/><path d="M11.500 7.800l3.200 3.200-3.200 3.200-3.200-3.200z" fill="#f8e070" stroke="#a87c10" stroke-width="1"/></svg>
<span class="t" style="left:69px;top:401px;transform:scaleX(0.9649);transform-origin:left center;">ForexCandlesticks</span>
<div style="left:37px;top:427px;width:10px;height:1px;background:repeating-linear-gradient(90deg,#808080 0 1px,transparent 1px 2px);"></div>
<svg class="ic" style="left:48px;top:418px" width="15" height="15" viewBox="0 0 15 15"><defs><linearGradient id="gfx" x1="0" y1="0" x2="0" y2="1"><stop offset="0" stop-color="#fcec90"/><stop offset="0.5" stop-color="#f4d850"/><stop offset="1" stop-color="#ecc838"/></linearGradient></defs><rect x="0.500" y="0.500" width="13" height="13" rx="2.500" fill="url(#gfx)" stroke="#c8a228"/><path d="M8.800 3.200c-2.200-0.800-2.600 0.600-3.100 3.400s-0.900 3.800-2.700 3.400M4.300 6.300h4" stroke="#7a5a08" stroke-width="1.250" fill="none"/><path d="M11.500 7.800l3.200 3.200-3.200 3.200-3.200-3.200z" fill="#f8e070" stroke="#a87c10" stroke-width="1"/></svg>
<span class="t" style="left:69px;top:419px;transform:scaleX(0.9468);transform-origin:left center;">Heiken Ashi</span>
<div style="left:37px;top:445px;width:10px;height:1px;background:repeating-linear-gradient(90deg,#808080 0 1px,transparent 1px 2px);"></div>
<svg class="ic" style="left:48px;top:436px" width="15" height="15" viewBox="0 0 15 15"><defs><linearGradient id="gfx" x1="0" y1="0" x2="0" y2="1"><stop offset="0" stop-color="#fcec90"/><stop offset="0.5" stop-color="#f4d850"/><stop offset="1" stop-color="#ecc838"/></linearGradient></defs><rect x="0.500" y="0.500" width="13" height="13" rx="2.500" fill="url(#gfx)" stroke="#c8a228"/><path d="M8.800 3.200c-2.200-0.800-2.600 0.600-3.100 3.400s-0.900 3.800-2.700 3.400M4.300 6.300h4" stroke="#7a5a08" stroke-width="1.250" fill="none"/><path d="M11.500 7.800l3.200 3.200-3.200 3.200-3.200-3.200z" fill="#f8e070" stroke="#a87c10" stroke-width="1"/></svg>
<span class="t" style="left:69px;top:437px;transform:scaleX(0.9542);transform-origin:left center;">Ichimoku</span>
<div style="left:37px;top:462px;width:10px;height:1px;background:repeating-linear-gradient(90deg,#808080 0 1px,transparent 1px 2px);"></div>
<svg class="ic" style="left:48px;top:453px" width="15" height="15" viewBox="0 0 15 15"><defs><linearGradient id="gfx" x1="0" y1="0" x2="0" y2="1"><stop offset="0" stop-color="#fcec90"/><stop offset="0.5" stop-color="#f4d850"/><stop offset="1" stop-color="#ecc838"/></linearGradient></defs><rect x="0.500" y="0.500" width="13" height="13" rx="2.500" fill="url(#gfx)" stroke="#c8a228"/><path d="M8.800 3.200c-2.200-0.800-2.600 0.600-3.100 3.400s-0.900 3.800-2.700 3.400M4.300 6.300h4" stroke="#7a5a08" stroke-width="1.250" fill="none"/><path d="M11.500 7.800l3.200 3.200-3.200 3.200-3.200-3.200z" fill="#f8e070" stroke="#a87c10" stroke-width="1"/></svg>
<span class="t" style="left:69px;top:454px;transform:scaleX(0.9608);transform-origin:left center;">iExposure</span>
<div style="left:37px;top:480px;width:10px;height:1px;background:repeating-linear-gradient(90deg,#808080 0 1px,transparent 1px 2px);"></div>
<svg class="ic" style="left:48px;top:471px" width="15" height="15" viewBox="0 0 15 15"><defs><linearGradient id="gfx" x1="0" y1="0" x2="0" y2="1"><stop offset="0" stop-color="#fcec90"/><stop offset="0.5" stop-color="#f4d850"/><stop offset="1" stop-color="#ecc838"/></linearGradient></defs><rect x="0.500" y="0.500" width="13" height="13" rx="2.500" fill="url(#gfx)" stroke="#c8a228"/><path d="M8.800 3.200c-2.200-0.800-2.600 0.600-3.100 3.400s-0.900 3.800-2.700 3.400M4.300 6.300h4" stroke="#7a5a08" stroke-width="1.250" fill="none"/><path d="M11.500 7.800l3.200 3.200-3.200 3.200-3.200-3.200z" fill="#f8e070" stroke="#a87c10" stroke-width="1"/></svg>
<span class="t" style="left:69px;top:472px;transform:scaleX(0.9268);transform-origin:left center;">MA Cross Channel EA V1.</span>
<div style="left:37px;top:498px;width:10px;height:1px;background:repeating-linear-gradient(90deg,#808080 0 1px,transparent 1px 2px);"></div>
<svg class="ic" style="left:48px;top:489px" width="15" height="15" viewBox="0 0 15 15"><defs><linearGradient id="gfx" x1="0" y1="0" x2="0" y2="1"><stop offset="0" stop-color="#fcec90"/><stop offset="0.5" stop-color="#f4d850"/><stop offset="1" stop-color="#ecc838"/></linearGradient></defs><rect x="0.500" y="0.500" width="13" height="13" rx="2.500" fill="url(#gfx)" stroke="#c8a228"/><path d="M8.800 3.200c-2.200-0.800-2.600 0.600-3.100 3.400s-0.900 3.800-2.700 3.400M4.300 6.300h4" stroke="#7a5a08" stroke-width="1.250" fill="none"/><path d="M11.500 7.800l3.200 3.200-3.200 3.200-3.200-3.200z" fill="#f8e070" stroke="#a87c10" stroke-width="1"/></svg>
<span class="t" style="left:69px;top:490px;transform:scaleX(0.9596);transform-origin:left center;">MA Cross V1.0</span>
<div style="left:37px;top:516px;width:10px;height:1px;background:repeating-linear-gradient(90deg,#808080 0 1px,transparent 1px 2px);"></div>
<svg class="ic" style="left:48px;top:507px" width="15" height="15" viewBox="0 0 15 15"><defs><linearGradient id="gfx" x1="0" y1="0" x2="0" y2="1"><stop offset="0" stop-color="#fcec90"/><stop offset="0.5" stop-color="#f4d850"/><stop offset="1" stop-color="#ecc838"/></linearGradient></defs><rect x="0.500" y="0.500" width="13" height="13" rx="2.500" fill="url(#gfx)" stroke="#c8a228"/><path d="M8.800 3.200c-2.200-0.800-2.600 0.600-3.100 3.400s-0.900 3.800-2.700 3.400M4.300 6.300h4" stroke="#7a5a08" stroke-width="1.250" fill="none"/><path d="M11.500 7.800l3.200 3.200-3.200 3.200-3.200-3.200z" fill="#f8e070" stroke="#a87c10" stroke-width="1"/></svg>
<span class="t" style="left:69px;top:508px;transform:scaleX(0.9665);transform-origin:left center;">MA Cross V1.2</span>
<div style="left:37px;top:534px;width:10px;height:1px;background:repeating-linear-gradient(90deg,#808080 0 1px,transparent 1px 2px);"></div>
<svg class="ic" style="left:48px;top:525px" width="15" height="15" viewBox="0 0 15 15"><defs><linearGradient id="gfx" x1="0" y1="0" x2="0" y2="1"><stop offset="0" stop-color="#fcec90"/><stop offset="0.5" stop-color="#f4d850"/><stop offset="1" stop-color="#ecc838"/></linearGradient></defs><rect x="0.500" y="0.500" width="13" height="13" rx="2.500" fill="url(#gfx)" stroke="#c8a228"/><path d="M8.800 3.200c-2.200-0.800-2.600 0.600-3.100 3.400s-0.900 3.800-2.700 3.400M4.300 6.300h4" stroke="#7a5a08" stroke-width="1.250" fill="none"/><path d="M11.500 7.800l3.200 3.200-3.200 3.200-3.200-3.200z" fill="#f8e070" stroke="#a87c10" stroke-width="1"/></svg>
<span class="t" style="left:69px;top:526px;transform:scaleX(0.8954);transform-origin:left center;">MACD</span>
</div>
<div style="left:189px;top:380px;width:16px;height:159px;background:repeating-conic-gradient(#fff 0% 25%,#d4d0c8 0% 50%) 0 0/2px 2px;"></div>
<div style="left:189px;top:380px;width:16px;height:16px;box-sizing:border-box;background:#d4d0c8;border:1px solid;border-color:#fff #404040 #404040 #fff;box-shadow:inset -1px -1px 0 #808080;"></div>
<svg class="ic" style="left:193px;top:386px" width="7" height="4" viewBox="0 0 7 4"><path d="M0 4h7L3.5 0z" fill="#000"/></svg>
<div style="left:189px;top:523px;width:16px;height:16px;box-sizing:border-box;background:#d4d0c8;border:1px solid;border-color:#fff #404040 #404040 #fff;box-shadow:inset -1px -1px 0 #808080;"></div>
<svg class="ic" style="left:193px;top:529px" width="7" height="4" viewBox="0 0 7 4"><path d="M0 0h7L3.5 4z" fill="#000"/></svg>
<div style="left:189px;top:426px;width:16px;height:8px;box-sizing:border-box;background:#d4d0c8;border:1px solid;border-color:#fff #404040 #404040 #fff;box-shadow:inset -1px -1px 0 #808080;"></div>
<div style="left:64px;top:539px;width:141px;height:1px;background:#000;"></div>
<div style="left:1px;top:539px;width:63px;height:1px;background:#fff;"></div>
<div style="left:3px;top:539px;width:61px;height:18px;box-sizing:border-box;background:#fff;border:1px solid #000;border-top:none;"></div>
<span class="t" style="left:12.2px;top:541px;transform:scaleX(0.9188);transform-origin:left center;">Common</span>
<span class="t" style="left:73.5px;top:541px;transform:scaleX(0.9859);transform-origin:left center;color:#404040;">Favorites</span>
<div style="left:130px;top:543px;width:1px;height:12px;background:#404040;"></div>
<div style="left:209px;top:94px;width:1px;height:449px;background:#808080;"></div>
<div style="left:210px;top:95px;width:1710px;height:1px;background:#404040;"></div>
<div style="left:210px;top:95px;width:1px;height:468px;background:#404040;"></div>
<div style="left:211px;top:96px;width:1707px;height:445px;background:#000;"></div>
<div style="left:211px;top:541px;width:1708px;height:1px;background:#d4d0c8;"></div>
<div style="left:1918px;top:96px;width:1px;height:446px;background:#d4d0c8;"></div>
<div style="left:210px;top:542px;width:1710px;height:1px;background:#fff;"></div>
<div style="left:1919px;top:95px;width:1px;height:448px;background:#fff;"></div>
<svg class="ic" style="left:0;top:0" width="1920" height="545" viewBox="0 0 1920 545" shape-rendering="crispEdges" font-family="Liberation Sans, sans-serif" font-size="9.8"><path d="M215 122.5H1875M215 155.5H1875M215 188.5H1875M215 221.5H1875M215 254.5H1875M215 287.5H1875M215 320.5H1875M215 353.5H1875M215 386.5H1875M215 419.5H1875M215 451.5H1875M215 484.5H1875M215 517.5H1875" stroke="#778899" stroke-dasharray="3 3" fill="none"/><path d="M247.5 98V520M279.5 98V520M311.5 98V520M343.5 98V520M375.5 98V520M407.5 98V520M439.5 98V520M471.5 98V520M503.5 98V520M535.5 98V520M568.5 98V520M600.5 98V520M632.5 98V520M664.5 98V520M696.5 98V520M728.5 98V520M760.5 98V520M792.5 98V520M824.5 98V520M856.5 98V520M888.5 98V520M920.5 98V520M952.5 98V520M984.5 98V520M1016.5 98V520M1048.5 98V520M1080.5 98V520M1112.5 98V520M1145.5 98V520M1177.5 98V520M1209.5 98V520M1241.5 98V520M1273.5 98V520M1305.5 98V520M1337.5 98V520M1369.5 98V520M1401.5 98V520M1433.5 98V520M1465.5 98V520M1497.5 98V520M1529.5 98V520M1561.5 98V520M1593.5 98V520M1625.5 98V520M1657.5 98V520M1689.5 98V520M1722.5 98V520M1754.5 98V520M1786.5 98V520M1818.5 98V520M1850.5 98V520" stroke="#778899" stroke-dasharray="3 3" fill="none"/><path d="M214 138.5H1876" stroke="#778899" fill="none"/><path d="M215.5 427V439M217.5 427V435M219.5 423V435M221.5 427V440M223.5 424V444M225.5 413V432M227.5 420V426M229.5 417V425M231.5 418V428M233.5 418V428M235.5 419V426M237.5 417V427M239.5 422V427M241.5 421V426M243.5 415V427M245.5 422V437M247.5 422V441M249.5 429V438M251.5 427V438M253.5 429V440M255.5 429V439M257.5 426V442M259.5 437V443M261.5 434V444M263.5 435V443M265.5 428V441M267.5 429V438M269.5 426V434M271.5 425V435M273.5 415V434M275.5 431V436M277.5 425V439M279.5 435V444M281.5 437V446M283.5 435V445M285.5 440V445M287.5 436V450M289.5 432V446M291.5 437V460M293.5 439V447M295.5 435V450M297.5 431V456M299.5 437V446M301.5 434V452M303.5 442V452M305.5 444V455M307.5 447V464M309.5 458V463M311.5 452V477M313.5 460V473M315.5 460V478M317.5 462V471M319.5 457V474M321.5 460V469M323.5 459V468M325.5 462V475M327.5 462V471M329.5 453V472M331.5 461V471M333.5 452V468M335.5 453V459M337.5 450V456M339.5 449V455M341.5 446V464M343.5 455V466M345.5 452V466M347.5 455V470M349.5 463V487M351.5 479V494M353.5 484V498M355.5 486V499M357.5 491V499M359.5 489V502M361.5 490V497M363.5 483V502M365.5 490V505M367.5 493V499M369.5 491V498M371.5 488V503M373.5 492V501M375.5 498V507M377.5 491V507M379.5 500V510M381.5 503V508M383.5 492V506M385.5 491V505M387.5 485V499M389.5 475V487M391.5 478V485M393.5 473V485M395.5 468V484M397.5 469V476M399.5 469V476M401.5 466V475M403.5 471V479M405.5 476V491M407.5 477V490M409.5 483V489M411.5 484V492M413.5 484V492M415.5 486V492M417.5 486V502M419.5 480V498M421.5 489V496M423.5 484V498M425.5 485V503M427.5 488V497M429.5 486V492M431.5 483V490M433.5 479V488M435.5 471V485M437.5 471V491M439.5 476V486M441.5 473V497M443.5 465V479M445.5 462V473M447.5 458V471M449.5 445V461M451.5 439V457M453.5 432V445M455.5 428V440M457.5 420V432M459.5 424V429M461.5 425V430M463.5 422V432M465.5 423V435M467.5 421V439M469.5 409V431M471.5 422V434M473.5 428V436M475.5 421V435M477.5 429V434M479.5 432V440M481.5 425V451M483.5 438V448M485.5 441V450M487.5 440V457M489.5 440V445M491.5 434V454M493.5 425V439M495.5 406V426M497.5 408V422M499.5 400V410M501.5 406V416M503.5 409V419M505.5 415V421M507.5 416V421M509.5 410V420M511.5 411V419M513.5 404V416M515.5 395V417M517.5 400V411M519.5 404V412M521.5 404V410M523.5 398V408M525.5 400V413M527.5 402V409M529.5 401V412M531.5 399V413M533.5 405V416M535.5 407V420M537.5 407V416M539.5 412V426M541.5 421V431M543.5 427V436M545.5 431V442M547.5 425V440M549.5 433V443M551.5 431V440M553.5 429V439M555.5 419V436M557.5 425V434M559.5 427V440M561.5 425V432M563.5 429V434M565.5 426V434M567.5 423V429M569.5 420V434M571.5 416V430M573.5 416V434M575.5 421V436M577.5 425V436M579.5 423V433M581.5 413V427M583.5 399V423M585.5 401V409M587.5 395V402M589.5 388V406M591.5 391V401M593.5 394V399M595.5 393V399M597.5 390V400M599.5 385V394M601.5 374V392M603.5 373V392M605.5 378V388M607.5 375V393M609.5 383V392M611.5 384V394M613.5 387V398M615.5 384V393M617.5 392V397M619.5 391V398M621.5 390V404M623.5 395V404M625.5 388V403M627.5 398V408M629.5 403V409M631.5 401V408M633.5 405V415M635.5 408V414M637.5 408V415M639.5 403V419M641.5 405V410M643.5 400V408M645.5 401V411M647.5 409V461M649.5 428V444M651.5 442V449M653.5 442V450M655.5 445V458M657.5 449V459M659.5 454V462M661.5 455V468M663.5 454V466M665.5 454V467M667.5 454V465M669.5 452V462M671.5 453V463M673.5 461V470M675.5 462V469M677.5 458V466M679.5 459V465M681.5 460V470M683.5 453V464M685.5 453V462M687.5 444V457M689.5 439V452M691.5 430V445M693.5 431V443M695.5 430V438M697.5 429V442M699.5 436V451M701.5 444V457M703.5 446V468M705.5 466V478M707.5 470V483M709.5 475V487M711.5 478V488M713.5 477V485M715.5 481V487M717.5 482V489M719.5 479V486M721.5 458V484M723.5 461V473M725.5 459V480M727.5 454V466M729.5 456V466M731.5 454V460M733.5 448V456M735.5 448V465M737.5 454V464M739.5 458V471M741.5 460V468M743.5 463V479M745.5 461V472M747.5 463V472M749.5 466V478M751.5 459V474M753.5 463V475M755.5 465V471M757.5 465V475M759.5 464V475M761.5 466V477M763.5 466V473M765.5 457V471M767.5 457V466M769.5 457V469M771.5 461V477M773.5 466V489M775.5 471V482M777.5 474V482M779.5 474V486M781.5 478V486M783.5 485V496M785.5 490V502M787.5 488V497M789.5 489V495M791.5 482V492M793.5 483V491M795.5 483V489M797.5 480V487M799.5 481V487M801.5 479V486M803.5 476V482M805.5 477V485M807.5 476V490M809.5 478V489M811.5 478V487M813.5 480V490M815.5 484V491M817.5 486V497M819.5 468V489M821.5 460V481M823.5 461V473M825.5 449V462M827.5 439V457M829.5 449V461M831.5 450V458M833.5 454V463M835.5 456V479M837.5 456V467M839.5 457V473M841.5 465V475M843.5 467V474M845.5 471V478M847.5 470V479M849.5 468V478M851.5 465V481M853.5 467V475M855.5 467V478M857.5 462V474M859.5 463V470M861.5 453V465M863.5 451V459M865.5 445V456M867.5 439V450M869.5 431V446M871.5 422V438M873.5 422V431M875.5 415V426M877.5 391V423M879.5 396V404M881.5 393V400M883.5 390V400M885.5 378V396M887.5 373V384M889.5 374V381M891.5 370V383M893.5 376V383M895.5 372V381M897.5 373V382M899.5 373V381M901.5 375V381M903.5 377V383M905.5 375V389M907.5 381V391M909.5 380V391M911.5 377V387M913.5 371V382M915.5 365V375M917.5 365V375M919.5 367V375M921.5 364V381M923.5 376V386M925.5 378V388M927.5 378V383M929.5 375V387M931.5 376V386M933.5 374V388M935.5 374V384M937.5 371V385M939.5 370V387M941.5 378V391M943.5 358V392M945.5 374V395M947.5 380V400M949.5 388V399M951.5 392V398M953.5 391V402M955.5 393V399M957.5 396V404M959.5 397V407M961.5 405V413M963.5 408V422M965.5 405V413M967.5 407V416M969.5 409V414M971.5 404V417M973.5 411V419M975.5 404V413M977.5 399V412M979.5 404V410M981.5 399V409M983.5 401V410M985.5 402V417M987.5 402V418M989.5 394V408M991.5 399V407M993.5 395V406M995.5 395V402M997.5 389V407M999.5 391V406M1001.5 398V405M1003.5 395V406M1005.5 397V404M1007.5 397V403M1009.5 401V409M1011.5 405V414M1013.5 403V413M1015.5 405V415M1017.5 407V418M1019.5 402V413M1021.5 399V412M1023.5 396V407M1025.5 386V402M1027.5 386V398M1029.5 385V399M1031.5 391V400M1033.5 394V409M1035.5 396V402M1037.5 388V405M1039.5 384V402M1041.5 389V399M1043.5 388V397M1045.5 388V398M1047.5 388V397M1049.5 379V396M1051.5 389V396M1053.5 387V394M1055.5 390V400M1057.5 396V408M1059.5 395V405M1061.5 389V398M1063.5 376V396M1065.5 371V384M1067.5 363V378M1069.5 362V376M1071.5 355V370M1073.5 355V364M1075.5 348V360M1077.5 351V358M1079.5 352V361M1081.5 352V361M1083.5 345V365M1085.5 354V363M1087.5 356V363M1089.5 357V366M1091.5 359V369M1093.5 353V368M1095.5 359V371M1097.5 357V370M1099.5 361V372M1101.5 365V371M1103.5 360V371M1105.5 361V367M1107.5 365V379M1109.5 357V368M1111.5 359V365M1113.5 353V362M1115.5 353V361M1117.5 352V367M1119.5 349V360M1121.5 348V354M1123.5 342V353M1125.5 345V355M1127.5 342V348M1129.5 341V347M1131.5 340V347M1133.5 342V350M1135.5 343V349M1137.5 341V347M1139.5 343V351M1141.5 337V346M1143.5 337V346M1145.5 335V342M1147.5 334V346M1149.5 330V338M1151.5 324V333M1153.5 325V335M1155.5 331V343M1157.5 335V342M1159.5 332V341M1161.5 331V336M1163.5 314V332M1165.5 314V328M1167.5 317V325M1169.5 312V323M1171.5 315V322M1173.5 309V320M1175.5 314V322M1177.5 308V319M1179.5 313V326M1181.5 309V332M1183.5 315V330M1185.5 320V326M1187.5 319V334M1189.5 324V332M1191.5 326V334M1193.5 321V330M1195.5 314V326M1197.5 320V327M1199.5 310V330M1201.5 314V324M1203.5 313V326M1205.5 309V321M1207.5 315V323M1209.5 315V324M1211.5 305V317M1213.5 313V340M1215.5 333V356M1217.5 343V350M1219.5 338V356M1221.5 343V354M1223.5 351V362M1225.5 354V361M1227.5 358V364M1229.5 351V367M1231.5 354V366M1233.5 347V360M1235.5 351V359M1237.5 344V354M1239.5 347V353M1241.5 343V353M1243.5 346V363M1245.5 348V355M1247.5 347V361M1249.5 339V361M1251.5 349V357M1253.5 344V355M1255.5 345V352M1257.5 339V359M1259.5 338V363M1261.5 351V370M1263.5 360V386M1265.5 364V376M1267.5 370V378M1269.5 368V380M1271.5 374V387M1273.5 376V385M1275.5 380V391M1277.5 381V400M1279.5 380V393M1281.5 381V387M1283.5 382V389M1285.5 376V388M1287.5 371V384M1289.5 370V392M1291.5 368V381M1293.5 372V380M1295.5 367V377M1297.5 370V383M1299.5 377V393M1301.5 384V390M1303.5 380V388M1305.5 384V397M1307.5 393V403M1309.5 396V402M1311.5 384V398M1313.5 377V393M1315.5 374V382M1317.5 374V385M1319.5 358V384M1321.5 372V382M1323.5 373V386M1325.5 365V382M1327.5 371V383M1329.5 371V382M1331.5 372V382M1333.5 374V381M1335.5 373V386M1337.5 375V384M1339.5 376V385M1341.5 375V389M1343.5 379V389M1345.5 360V387M1347.5 354V381M1349.5 357V365M1351.5 363V368M1353.5 364V370M1355.5 362V381M1357.5 368V375M1359.5 366V378M1361.5 362V377M1363.5 367V376M1365.5 364V383M1367.5 361V371M1369.5 356V369M1371.5 361V370M1373.5 363V373M1375.5 365V376M1377.5 369V374M1379.5 362V377M1381.5 356V374M1383.5 364V373M1385.5 364V373M1387.5 358V368M1389.5 355V363M1391.5 351V362M1393.5 345V366M1395.5 341V356M1397.5 322V351M1399.5 321V343M1401.5 311V324M1403.5 314V325M1405.5 311V320M1407.5 312V319M1409.5 315V324M1411.5 318V328M1413.5 320V334M1415.5 323V334M1417.5 318V332M1419.5 325V336M1421.5 324V342M1423.5 317V332M1425.5 320V328M1427.5 317V329M1429.5 319V326M1431.5 320V327M1433.5 319V326M1435.5 318V324M1437.5 319V331M1439.5 310V324M1441.5 310V326M1443.5 314V342M1445.5 330V341M1447.5 329V337M1449.5 320V333M1451.5 319V332M1453.5 319V325M1455.5 319V333M1457.5 317V327M1459.5 320V327M1461.5 323V329M1463.5 320V336M1465.5 321V330M1467.5 324V331M1469.5 316V333M1471.5 319V331M1473.5 315V327M1475.5 318V326M1477.5 315V330M1479.5 319V334M1481.5 323V330M1483.5 320V330M1485.5 315V328M1487.5 314V334M1489.5 312V325M1491.5 319V337M1493.5 334V348M1495.5 340V353M1497.5 344V354M1499.5 345V367M1501.5 348V363M1503.5 345V357M1505.5 350V358M1507.5 349V357M1509.5 351V362M1511.5 343V354M1513.5 348V355M1515.5 346V354M1517.5 346V355M1519.5 345V354M1521.5 338V354M1523.5 349V355M1525.5 347V357M1527.5 347V354M1529.5 338V352M1531.5 345V353M1533.5 342V354M1535.5 343V356M1537.5 351V357M1539.5 341V353M1541.5 328V347M1543.5 327V335M1545.5 321V333M1547.5 310V323M1549.5 294V318M1551.5 291V308M1553.5 283V295M1555.5 281V290M1557.5 279V298M1559.5 284V298M1561.5 288V301M1563.5 287V297M1565.5 285V297M1567.5 279V294M1569.5 281V289M1571.5 284V292M1573.5 282V290M1575.5 281V292M1577.5 281V288M1579.5 280V285M1581.5 271V291M1583.5 262V291M1585.5 265V282M1587.5 260V276M1589.5 263V275M1591.5 267V273M1593.5 265V277M1595.5 272V284M1597.5 277V288M1599.5 281V294M1601.5 282V297M1603.5 280V286M1605.5 275V286M1607.5 274V282M1609.5 266V278M1611.5 269V276M1613.5 261V276M1615.5 267V275M1617.5 268V275M1619.5 265V275M1621.5 253V276M1623.5 264V270M1625.5 266V273M1627.5 268V276M1629.5 261V273M1631.5 255V279M1633.5 263V274M1635.5 264V270M1637.5 260V273M1639.5 257V264M1641.5 261V277M1643.5 268V278M1645.5 273V281M1647.5 262V278M1649.5 245V266M1651.5 233V255M1653.5 238V245M1655.5 241V247M1657.5 235V245M1659.5 238V245M1661.5 240V255M1663.5 236V250M1665.5 242V248M1667.5 234V256M1669.5 230V249M1671.5 224V248M1673.5 229V242M1675.5 228V244M1677.5 232V251M1679.5 222V238M1681.5 233V245M1683.5 231V245M1685.5 229V241M1687.5 221V231M1689.5 212V224M1691.5 216V225M1693.5 217V222M1695.5 204V223M1697.5 207V227M1699.5 201V217M1701.5 200V216M1703.5 208V220M1705.5 206V216M1707.5 207V214M1709.5 208V225M1711.5 206V212M1713.5 201V214M1715.5 201V208M1717.5 201V206M1719.5 196V208M1721.5 201V208M1723.5 182V211M1725.5 188V211M1727.5 197V210M1729.5 198V209M1731.5 192V203M1733.5 187V203M1735.5 190V197M1737.5 189V200M1739.5 199V207M1741.5 196V206M1743.5 194V205M1745.5 184V196M1747.5 183V196M1749.5 177V191M1751.5 178V187M1753.5 172V183M1755.5 176V181M1757.5 172V187M1759.5 176V185M1761.5 176V183M1763.5 175V188M1765.5 177V184M1767.5 173V189M1769.5 170V186M1771.5 178V186M1773.5 176V185M1775.5 181V187M1777.5 178V188M1779.5 171V183M1781.5 171V182M1783.5 177V186M1785.5 179V190M1787.5 171V183M1789.5 172V186M1791.5 165V178M1793.5 154V170M1795.5 157V171M1797.5 160V176M1799.5 170V177M1801.5 175V182M1803.5 175V181M1805.5 170V183M1807.5 169V184M1809.5 170V179M1811.5 168V176M1813.5 160V174M1815.5 159V165M1817.5 152V162M1819.5 153V163M1821.5 151V159M1823.5 143V154M1825.5 144V150M1827.5 133V156M1829.5 141V149M1831.5 138V145M1833.5 126V142M1835.5 125V142M1837.5 126V135M1839.5 120V131M1841.5 122V130M1843.5 122V140M1845.5 126V139M1847.5 136V142M1849.5 135V141M1851.5 129V140M1853.5 132V139M1855.5 131V140M1857.5 131V138M1859.5 132V147M1861.5 136V143M1863.5 134V147M1865.5 127V148M1867.5 137V144M1869.5 128V146M1871.5 130V142" stroke="#00ff00" fill="none"/><path d="M213.5 98V521M213 98.5H1877M1876.5 98V521M213 520.5H1877" stroke="#fff" fill="none"/><path d="M1877 122.5H1880M1877 155.5H1880M1877 188.5H1880M1877 221.5H1880M1877 254.5H1880M1877 287.5H1880M1877 320.5H1880M1877 353.5H1880M1877 386.5H1880M1877 419.5H1880M1877 451.5H1880M1877 484.5H1880M1877 517.5H1880" stroke="#fff" fill="none"/><g fill="#fff" shape-rendering="auto"><text x="1882.3" y="125.3" textLength="33.5" lengthAdjust="spacingAndGlyphs">0.98450</text><text x="1882.3" y="158.3" textLength="33.5" lengthAdjust="spacingAndGlyphs">0.98090</text><text x="1882.3" y="191.3" textLength="33.5" lengthAdjust="spacingAndGlyphs">0.97730</text><text x="1882.3" y="224.3" textLength="33.5" lengthAdjust="spacingAndGlyphs">0.97370</text><text x="1882.3" y="257.3" textLength="33.5" lengthAdjust="spacingAndGlyphs">0.97010</text><text x="1882.3" y="290.3" textLength="33.5" lengthAdjust="spacingAndGlyphs">0.96650</text><text x="1882.3" y="323.3" textLength="33.5" lengthAdjust="spacingAndGlyphs">0.96300</text><text x="1882.3" y="356.3" textLength="33.5" lengthAdjust="spacingAndGlyphs">0.95940</text><text x="1882.3" y="389.3" textLength="33.5" lengthAdjust="spacingAndGlyphs">0.95580</text><text x="1882.3" y="422.3" textLength="33.5" lengthAdjust="spacingAndGlyphs">0.95220</text><text x="1882.3" y="454.3" textLength="33.5" lengthAdjust="spacingAndGlyphs">0.94860</text><text x="1882.3" y="487.3" textLength="33.5" lengthAdjust="spacingAndGlyphs">0.94500</text><text x="1882.3" y="520.3" textLength="33.5" lengthAdjust="spacingAndGlyphs">0.94150</text></g><rect x="1878" y="133" width="41" height="11" fill="#fff"/><g shape-rendering="auto"><text x="1882.3" y="141.8" textLength="33.5" lengthAdjust="spacingAndGlyphs" fill="#000">0.98267</text></g><g fill="#fff" shape-rendering="auto"><text x="212.8" y="533" textLength="46.9" lengthAdjust="spacingAndGlyphs">8 Mar 2018</text><text x="278.3" y="533" textLength="54.6" lengthAdjust="spacingAndGlyphs">12 Mar 04:00</text><text x="342.3" y="533" textLength="54.6" lengthAdjust="spacingAndGlyphs">13 Mar 12:00</text><text x="406.3" y="533" textLength="54.6" lengthAdjust="spacingAndGlyphs">14 Mar 20:00</text><text x="470.3" y="533" textLength="54.6" lengthAdjust="spacingAndGlyphs">16 Mar 04:00</text><text x="534.3" y="533" textLength="54.6" lengthAdjust="spacingAndGlyphs">19 Mar 13:00</text><text x="599.3" y="533" textLength="54.6" lengthAdjust="spacingAndGlyphs">20 Mar 21:00</text><text x="663.3" y="533" textLength="54.6" lengthAdjust="spacingAndGlyphs">22 Mar 05:00</text><text x="727.3" y="533" textLength="54.6" lengthAdjust="spacingAndGlyphs">23 Mar 13:00</text><text x="791.3" y="533" textLength="54.6" lengthAdjust="spacingAndGlyphs">26 Mar 22:00</text><text x="855.3" y="533" textLength="54.6" lengthAdjust="spacingAndGlyphs">28 Mar 06:00</text><text x="919.3" y="533" textLength="54.6" lengthAdjust="spacingAndGlyphs">29 Mar 14:00</text><text x="983.3" y="533" textLength="54.6" lengthAdjust="spacingAndGlyphs">30 Mar 22:00</text><text x="1047.3" y="533" textLength="47.4" lengthAdjust="spacingAndGlyphs">3 Apr 06:00</text><text x="1111.3" y="533" textLength="47.4" lengthAdjust="spacingAndGlyphs">4 Apr 14:00</text><text x="1176.3" y="533" textLength="47.4" lengthAdjust="spacingAndGlyphs">5 Apr 22:00</text><text x="1240.3" y="533" textLength="47.4" lengthAdjust="spacingAndGlyphs">9 Apr 06:00</text><text x="1304.3" y="533" textLength="52.6" lengthAdjust="spacingAndGlyphs">10 Apr 14:00</text><text x="1368.3" y="533" textLength="51.9" lengthAdjust="spacingAndGlyphs">11 Apr 22:00</text><text x="1432.3" y="533" textLength="52.6" lengthAdjust="spacingAndGlyphs">13 Apr 06:00</text><text x="1496.3" y="533" textLength="52.6" lengthAdjust="spacingAndGlyphs">16 Apr 14:00</text><text x="1560.3" y="533" textLength="52.6" lengthAdjust="spacingAndGlyphs">17 Apr 22:00</text><text x="1624.3" y="533" textLength="52.6" lengthAdjust="spacingAndGlyphs">19 Apr 06:00</text><text x="1688.3" y="533" textLength="52.6" lengthAdjust="spacingAndGlyphs">20 Apr 14:00</text><text x="1753.3" y="533" textLength="52.6" lengthAdjust="spacingAndGlyphs">23 Apr 22:00</text><text x="1817.3" y="533" textLength="52.6" lengthAdjust="spacingAndGlyphs">25 Apr 06:00</text></g><path d="M213.5 520V524M279.5 520V524M343.5 520V524M407.5 520V524M471.5 520V524M535.5 520V524M600.5 520V524M664.5 520V524M728.5 520V524M792.5 520V524M856.5 520V524M920.5 520V524M984.5 520V524M1048.5 520V524M1112.5 520V524M1177.5 520V524M1241.5 520V524M1305.5 520V524M1369.5 520V524M1433.5 520V524M1497.5 520V524M1561.5 520V524M1625.5 520V524M1689.5 520V524M1754.5 520V524M1818.5 520V524" stroke="#fff" fill="none"/><path d="M217 105h7l-3.5 4z" fill="#fff" shape-rendering="auto"/><g fill="#fff" shape-rendering="auto"><text x="229" y="110" textLength="55.6" lengthAdjust="spacingAndGlyphs">USDCHF,H1</text><text x="291" y="110" textLength="141.8" lengthAdjust="spacingAndGlyphs">0.98259 0.98267 0.98242 0.98267</text></g></svg>
<div style="left:210px;top:543px;width:1710px;height:1px;background:#000;"></div>
<div style="left:372px;top:543px;width:80px;height:19px;box-sizing:border-box;background:#fff;border:1px solid #000;border-top:none;border-left-color:#fff;"></div>
<span class="t" style="left:226.6px;top:545px;transform:scaleX(0.9013);transform-origin:left center;color:#404040;">GBPUSD,H1</span>
<span class="t" style="left:306.6px;top:545px;transform:scaleX(0.9188);transform-origin:left center;color:#404040;">USDJPY,H1</span>
<span class="t" style="left:382px;top:545px;transform:scaleX(0.9331);transform-origin:left center;">USDCHF,H1</span>
<span class="t" style="left:461.8px;top:545px;transform:scaleX(0.9093);transform-origin:left center;color:#404040;">EURUSD,H1</span>
<span class="t" style="left:542px;top:545px;transform:scaleX(0.9093);transform-origin:left center;color:#404040;">EURUSD,H1</span>
<span class="t" style="left:623px;top:545px;transform:scaleX(0.8934);transform-origin:left center;color:#404040;">GBPUSD,H1</span>
<span class="t" style="left:702.2px;top:545px;transform:scaleX(0.9261);transform-origin:left center;color:#404040;">NZDUSD,H1</span>
<span class="t" style="left:783.2px;top:545px;transform:scaleX(0.9150);transform-origin:left center;color:#404040;">NZDUSD,H1</span>
<div style="left:296px;top:546px;width:1px;height:13px;background:#404040;"></div>
<div style="left:532px;top:546px;width:1px;height:13px;background:#404040;"></div>
<div style="left:612px;top:546px;width:1px;height:13px;background:#404040;"></div>
<div style="left:692px;top:546px;width:1px;height:13px;background:#404040;"></div>
<div style="left:773px;top:546px;width:1px;height:13px;background:#404040;"></div>
<div style="left:854px;top:546px;width:1px;height:13px;background:#404040;"></div>
<svg class="ic" style="left:1888px;top:548px" width="25" height="7" viewBox="0 0 25 7"><path d="M4 0v7L0 3.5zM19 0v7l4-3.5z" fill="#808080"/></svg>
<div style="left:0px;top:563px;width:1920px;height:1px;background:#fff;"></div>
<div style="left:0px;top:581px;width:11px;height:223px;background:linear-gradient(90deg,#a8a8a8,#bcbcbc);"></div>
<div style="left:12px;top:567px;width:1907px;height:1px;background:#808080;"></div>
<div style="left:12px;top:567px;width:1px;height:237px;background:#808080;"></div>
<svg class="ic" style="left:1px;top:570px" width="6" height="6" viewBox="0 0 6 6"><path d="M0.5 0.5l5 5M5.5 0.5l-5 5" stroke="#000" stroke-width="1.5"/></svg>
<div style="left:13px;top:568px;width:1904px;height:236px;background:#fff;"></div>
<div style="left:1917px;top:567px;width:2px;height:237px;background:#fff;"></div>
<div style="left:13px;top:568px;width:139px;height:17px;box-sizing:border-box;background:#d4d0c8;border:1px solid;border-color:#fff #404040 #404040 #fff;box-shadow:inset -1px -1px 0 #808080;"></div>
<span class="t" style="left:18.5px;top:570px;transform:scaleX(0.9744);transform-origin:left center;">Order</span>
<svg class="ic" style="left:59px;top:573px" width="8" height="7" viewBox="0 0 8 7"><path d="M0.5 6.5L4 0.5" stroke="#808080"/><path d="M4 0.5l3.5 6h-7" stroke="#fff" fill="none"/></svg>
<div style="left:152px;top:568px;width:239px;height:17px;box-sizing:border-box;background:#d4d0c8;border:1px solid;border-color:#fff #404040 #404040 #fff;box-shadow:inset -1px -1px 0 #808080;"></div>
<span class="t" style="right:1535.4px;top:570px;transform:scaleX(0.9153);transform-origin:right center;">Time</span>
<div style="left:391px;top:568px;width:107px;height:17px;box-sizing:border-box;background:#d4d0c8;border:1px solid;border-color:#fff #404040 #404040 #fff;box-shadow:inset -1px -1px 0 #808080;"></div>
<span class="t" style="right:1428.9px;top:570px;transform:scaleX(1.0147);transform-origin:right center;">Type</span>
<div style="left:498px;top:568px;width:86px;height:17px;box-sizing:border-box;background:#d4d0c8;border:1px solid;border-color:#fff #404040 #404040 #fff;box-shadow:inset -1px -1px 0 #808080;"></div>
<span class="t" style="right:1343px;top:570px;transform:scaleX(0.8739);transform-origin:right center;">Size</span>
<div style="left:584px;top:568px;width:107px;height:17px;box-sizing:border-box;background:#d4d0c8;border:1px solid;border-color:#fff #404040 #404040 #fff;box-shadow:inset -1px -1px 0 #808080;"></div>
<span class="t" style="right:1235.5px;top:570px;transform:scaleX(0.9460);transform-origin:right center;">Symbol</span>
<div style="left:691px;top:568px;width:107px;height:17px;box-sizing:border-box;background:#d4d0c8;border:1px solid;border-color:#fff #404040 #404040 #fff;box-shadow:inset -1px -1px 0 #808080;"></div>
<span class="t" style="right:1127.8px;top:570px;transform:scaleX(0.9337);transform-origin:right center;">Price</span>
<div style="left:798px;top:568px;width:107px;height:17px;box-sizing:border-box;background:#d4d0c8;border:1px solid;border-color:#fff #404040 #404040 #fff;box-shadow:inset -1px -1px 0 #808080;"></div>
<span class="t" style="right:1020.8px;top:570px;transform:scaleX(0.9194);transform-origin:right center;">S / L</span>
<div style="left:905px;top:568px;width:107px;height:17px;box-sizing:border-box;background:#d4d0c8;border:1px solid;border-color:#fff #404040 #404040 #fff;box-shadow:inset -1px -1px 0 #808080;"></div>
<span class="t" style="right:913.8px;top:570px;transform:scaleX(0.9511);transform-origin:right center;">T / P</span>
<div style="left:1012px;top:568px;width:239px;height:17px;box-sizing:border-box;background:#d4d0c8;border:1px solid;border-color:#fff #404040 #404040 #fff;box-shadow:inset -1px -1px 0 #808080;"></div>
<span class="t" style="right:675.8px;top:570px;transform:scaleX(0.9153);transform-origin:right center;">Time</span>
<div style="left:1251px;top:568px;width:107px;height:17px;box-sizing:border-box;background:#d4d0c8;border:1px solid;border-color:#fff #404040 #404040 #fff;box-shadow:inset -1px -1px 0 #808080;"></div>
<span class="t" style="right:568.5999999999999px;top:570px;transform:scaleX(0.9337);transform-origin:right center;">Price</span>
<div style="left:1358px;top:568px;width:107px;height:17px;box-sizing:border-box;background:#d4d0c8;border:1px solid;border-color:#fff #404040 #404040 #fff;box-shadow:inset -1px -1px 0 #808080;"></div>
<span class="t" style="right:461.5px;top:570px;transform:scaleX(0.9594);transform-origin:right center;">Swap</span>
<div style="left:1465px;top:568px;width:118px;height:17px;box-sizing:border-box;background:#d4d0c8;border:1px solid;border-color:#fff #404040 #404040 #fff;box-shadow:inset -1px -1px 0 #808080;"></div>
<span class="t" style="right:342.79999999999995px;top:570px;transform:scaleX(1.0516);transform-origin:right center;">Profit</span>
<div style="left:1583px;top:568px;width:334px;height:17px;box-sizing:border-box;background:#d4d0c8;border:1px solid;border-color:#fff #404040 #404040 #fff;box-shadow:inset -1px -1px 0 #808080;"></div>
<span class="t" style="right:9.099999999999909px;top:570px;transform:scaleX(0.9522);transform-origin:right center;">Comment</span>
<div style="left:13px;top:585px;width:1904px;height:20px;background:#fff;"></div>
<div style="left:906px;top:586px;width:104px;height:18px;background:#5aeb5a;"></div>
<svg class="ic" style="left:16px;top:588px" width="15" height="16" viewBox="0 0 15 16"><path d="M1 0.500h7l3 3v10h-10z" fill="#fff" stroke="#707070"/><path d="M8 0.500v3h3" fill="#e8e8e8" stroke="#707070"/><circle cx="10.500" cy="11.300" r="3.300" fill="#f04818" stroke="#b02800" stroke-width="0.800"/><circle cx="9.700" cy="10.300" r="1" fill="#ff9868"/></svg>
<span class="t" style="left:35.3px;top:588px;transform:scaleX(0.9685);transform-origin:left center;">20389096</span>
<span class="t" style="right:1533.1px;top:588px;transform:scaleX(1.0245);transform-origin:right center;">2018.04.24 05:00:01</span>
<span class="t" style="right:1426.6px;top:588px;transform:scaleX(0.9269);transform-origin:right center;">sell</span>
<span class="t" style="right:1340px;top:588px;">0.10</span>
<span class="t" style="right:1233.2px;top:588px;transform:scaleX(0.9809);transform-origin:right center;">gbpusd</span>
<span class="t" style="right:1124.7px;top:588px;">1.39314</span>
<span class="t" style="right:1018.5px;top:588px;">0.00000</span>
<span class="t" style="right:911px;top:588px;">1.39471</span>
<span class="t" style="right:673.0999999999999px;top:588px;transform:scaleX(1.0245);transform-origin:right center;">2018.04.25 10:12:08</span>
<span class="t" style="right:566.2px;top:588px;">1.39470</span>
<span class="t" style="right:459.20000000000005px;top:588px;">0.11</span>
<span class="t" style="right:340.9000000000001px;top:588px;">-15.60</span>
<span class="t" style="right:7.7000000000000455px;top:588px;transform:scaleX(1.0022);transform-origin:right center;">VantagePointX one: Basket# 0[tp</span>
<div style="left:13px;top:605px;width:1904px;height:20px;background:#ececec;"></div>
<div style="left:906px;top:606px;width:104px;height:18px;background:#5aeb5a;"></div>
<svg class="ic" style="left:16px;top:608px" width="15" height="16" viewBox="0 0 15 16"><path d="M1 0.500h7l3 3v10h-10z" fill="#fff" stroke="#707070"/><path d="M8 0.500v3h3" fill="#e8e8e8" stroke="#707070"/><circle cx="10.500" cy="11.300" r="3.300" fill="#f04818" stroke="#b02800" stroke-width="0.800"/><circle cx="9.700" cy="10.300" r="1" fill="#ff9868"/></svg>
<span class="t" style="left:35.3px;top:608px;transform:scaleX(0.9685);transform-origin:left center;">20390506</span>
<span class="t" style="right:1533.1px;top:608px;transform:scaleX(1.0245);transform-origin:right center;">2018.04.24 06:00:00</span>
<span class="t" style="right:1426.6px;top:608px;transform:scaleX(0.9269);transform-origin:right center;">sell</span>
<span class="t" style="right:1340px;top:608px;">0.10</span>
<span class="t" style="right:1233.2px;top:608px;transform:scaleX(0.9698);transform-origin:right center;">nzdusd</span>
<span class="t" style="right:1124.7px;top:608px;">0.71185</span>
<span class="t" style="right:1018.5px;top:608px;">0.00000</span>
<span class="t" style="right:911px;top:608px;">0.70985</span>
<span class="t" style="right:673.0999999999999px;top:608px;transform:scaleX(1.0245);transform-origin:right center;">2018.04.25 07:33:47</span>
<span class="t" style="right:566.2px;top:608px;">0.70985</span>
<span class="t" style="right:459.20000000000005px;top:608px;">-0.24</span>
<span class="t" style="right:340.9000000000001px;top:608px;">20.00</span>
<span class="t" style="right:7.7000000000000455px;top:608px;transform:scaleX(1.0022);transform-origin:right center;">VantagePointX one: Basket# 0[tp</span>
<div style="left:13px;top:625px;width:1904px;height:20px;background:#fff;"></div>
<div style="left:906px;top:626px;width:104px;height:18px;background:#5aeb5a;"></div>
<svg class="ic" style="left:16px;top:628px" width="15" height="16" viewBox="0 0 15 16"><path d="M1 0.500h7l3 3v10h-10z" fill="#fff" stroke="#707070"/><path d="M8 0.500v3h3" fill="#e8e8e8" stroke="#707070"/><circle cx="10.500" cy="11.300" r="3.300" fill="#f04818" stroke="#b02800" stroke-width="0.800"/><circle cx="9.700" cy="10.300" r="1" fill="#ff9868"/></svg>
<span class="t" style="left:35.3px;top:628px;transform:scaleX(0.9685);transform-origin:left center;">20398330</span>
<span class="t" style="right:1533.1px;top:628px;transform:scaleX(1.0328);transform-origin:right center;">2018.04.24 11:00:00</span>
<span class="t" style="right:1426.6px;top:628px;transform:scaleX(0.9269);transform-origin:right center;">sell</span>
<span class="t" style="right:1340px;top:628px;">0.10</span>
<span class="t" style="right:1233.2px;top:628px;transform:scaleX(0.9809);transform-origin:right center;">gbpusd</span>
<span class="t" style="right:1124.7px;top:628px;">1.39301</span>
<span class="t" style="right:1018.5px;top:628px;">0.00000</span>
<span class="t" style="right:911px;top:628px;">1.39478</span>
<span class="t" style="right:673.0999999999999px;top:628px;transform:scaleX(1.0245);transform-origin:right center;">2018.04.25 10:06:35</span>
<span class="t" style="right:566.2px;top:628px;">1.39477</span>
<span class="t" style="right:459.20000000000005px;top:628px;">0.11</span>
<span class="t" style="right:340.9000000000001px;top:628px;">-17.60</span>
<span class="t" style="right:7.7000000000000455px;top:628px;transform:scaleX(1.0032);transform-origin:right center;">VantagePointX three: Basket# 0[</span>
<div style="left:13px;top:645px;width:1904px;height:20px;background:#ececec;"></div>
<div style="left:906px;top:646px;width:104px;height:18px;background:#5aeb5a;"></div>
<svg class="ic" style="left:16px;top:648px" width="15" height="16" viewBox="0 0 15 16"><path d="M1 0.500h7l3 3v10h-10z" fill="#fff" stroke="#707070"/><path d="M8 0.500v3h3" fill="#e8e8e8" stroke="#707070"/><circle cx="10.500" cy="11.300" r="3.300" fill="#f04818" stroke="#b02800" stroke-width="0.800"/><circle cx="9.700" cy="10.300" r="1" fill="#ff9868"/></svg>
<span class="t" style="left:35.3px;top:648px;transform:scaleX(0.9685);transform-origin:left center;">20401236</span>
<span class="t" style="right:1533.1px;top:648px;transform:scaleX(1.0245);transform-origin:right center;">2018.04.24 12:00:00</span>
<span class="t" style="right:1426.6px;top:648px;transform:scaleX(0.9269);transform-origin:right center;">sell</span>
<span class="t" style="right:1340px;top:648px;">0.16</span>
<span class="t" style="right:1233.2px;top:648px;transform:scaleX(0.9809);transform-origin:right center;">gbpusd</span>
<span class="t" style="right:1124.7px;top:648px;">1.39531</span>
<span class="t" style="right:1018.5px;top:648px;">0.00000</span>
<span class="t" style="right:911px;top:648px;">1.39478</span>
<span class="t" style="right:673.0999999999999px;top:648px;transform:scaleX(1.0245);transform-origin:right center;">2018.04.25 10:06:35</span>
<span class="t" style="right:566.2px;top:648px;">1.39477</span>
<span class="t" style="right:459.20000000000005px;top:648px;">0.18</span>
<span class="t" style="right:340.9000000000001px;top:648px;">8.64</span>
<span class="t" style="right:7.7000000000000455px;top:648px;transform:scaleX(1.0032);transform-origin:right center;">VantagePointX three: Basket# 1[</span>
<div style="left:13px;top:665px;width:1904px;height:20px;background:#fff;"></div>
<div style="left:906px;top:666px;width:104px;height:18px;background:#5aeb5a;"></div>
<svg class="ic" style="left:16px;top:668px" width="15" height="16" viewBox="0 0 15 16"><path d="M1 0.500h7l3 3v10h-10z" fill="#fff" stroke="#707070"/><path d="M8 0.500v3h3" fill="#e8e8e8" stroke="#707070"/><circle cx="10.500" cy="11.300" r="3.300" fill="#f04818" stroke="#b02800" stroke-width="0.800"/><circle cx="9.700" cy="10.300" r="1" fill="#ff9868"/></svg>
<span class="t" style="left:35.3px;top:668px;transform:scaleX(0.9685);transform-origin:left center;">20401335</span>
<span class="t" style="right:1533.1px;top:668px;transform:scaleX(1.0245);transform-origin:right center;">2018.04.24 12:00:01</span>
<span class="t" style="right:1426.6px;top:668px;transform:scaleX(0.9269);transform-origin:right center;">sell</span>
<span class="t" style="right:1340px;top:668px;">0.16</span>
<span class="t" style="right:1233.2px;top:668px;transform:scaleX(0.9809);transform-origin:right center;">gbpusd</span>
<span class="t" style="right:1124.7px;top:668px;">1.39525</span>
<span class="t" style="right:1018.5px;top:668px;">0.00000</span>
<span class="t" style="right:911px;top:668px;">1.39471</span>
<span class="t" style="right:673.0999999999999px;top:668px;transform:scaleX(1.0245);transform-origin:right center;">2018.04.25 10:12:08</span>
<span class="t" style="right:566.2px;top:668px;">1.39470</span>
<span class="t" style="right:459.20000000000005px;top:668px;">0.18</span>
<span class="t" style="right:340.9000000000001px;top:668px;">8.80</span>
<span class="t" style="right:7.7000000000000455px;top:668px;transform:scaleX(1.0022);transform-origin:right center;">VantagePointX one: Basket# 1[tp</span>
<div style="left:13px;top:685px;width:1904px;height:20px;background:#ececec;"></div>
<div style="left:906px;top:686px;width:104px;height:18px;background:#5aeb5a;"></div>
<svg class="ic" style="left:16px;top:688px" width="15" height="16" viewBox="0 0 15 16"><path d="M1 0.500h7l3 3v10h-10z" fill="#fff" stroke="#707070"/><path d="M8 0.500v3h3" fill="#e8e8e8" stroke="#707070"/><circle cx="10.500" cy="11.300" r="3.300" fill="#f04818" stroke="#b02800" stroke-width="0.800"/><circle cx="9.700" cy="10.300" r="1" fill="#ff9868"/></svg>
<span class="t" style="left:35.3px;top:688px;transform:scaleX(0.9685);transform-origin:left center;">20440930</span>
<span class="t" style="right:1533.1px;top:688px;transform:scaleX(1.0245);transform-origin:right center;">2018.04.25 03:00:00</span>
<span class="t" style="right:1426.6px;top:688px;transform:scaleX(0.9269);transform-origin:right center;">sell</span>
<span class="t" style="right:1340px;top:688px;">0.24</span>
<span class="t" style="right:1233.2px;top:688px;transform:scaleX(0.9809);transform-origin:right center;">gbpusd</span>
<span class="t" style="right:1124.7px;top:688px;">1.39934</span>
<span class="t" style="right:1018.5px;top:688px;">0.00000</span>
<span class="t" style="right:911px;top:688px;">1.39478</span>
<span class="t" style="right:673.0999999999999px;top:688px;transform:scaleX(1.0245);transform-origin:right center;">2018.04.25 10:06:35</span>
<span class="t" style="right:566.2px;top:688px;">1.39477</span>
<span class="t" style="right:459.20000000000005px;top:688px;">0.00</span>
<span class="t" style="right:340.9000000000001px;top:688px;">109.68</span>
<span class="t" style="right:7.7000000000000455px;top:688px;transform:scaleX(1.0032);transform-origin:right center;">VantagePointX three: Basket# 2[</span>
<div style="left:13px;top:705px;width:1904px;height:20px;background:#fff;"></div>
<div style="left:906px;top:706px;width:104px;height:18px;background:#5aeb5a;"></div>
<svg class="ic" style="left:16px;top:708px" width="15" height="16" viewBox="0 0 15 16"><path d="M1 0.500h7l3 3v10h-10z" fill="#fff" stroke="#707070"/><path d="M8 0.500v3h3" fill="#e8e8e8" stroke="#707070"/><circle cx="10.500" cy="11.300" r="3.300" fill="#f04818" stroke="#b02800" stroke-width="0.800"/><circle cx="9.700" cy="10.300" r="1" fill="#ff9868"/></svg>
<span class="t" style="left:35.3px;top:708px;transform:scaleX(0.9685);transform-origin:left center;">20440976</span>
<span class="t" style="right:1533.1px;top:708px;transform:scaleX(1.0245);transform-origin:right center;">2018.04.25 03:00:01</span>
<span class="t" style="right:1426.6px;top:708px;transform:scaleX(0.9269);transform-origin:right center;">sell</span>
<span class="t" style="right:1340px;top:708px;">0.24</span>
<span class="t" style="right:1233.2px;top:708px;transform:scaleX(0.9809);transform-origin:right center;">gbpusd</span>
<span class="t" style="right:1124.7px;top:708px;">1.39917</span>
<span class="t" style="right:1018.5px;top:708px;">0.00000</span>
<span class="t" style="right:911px;top:708px;">1.39471</span>
<span class="t" style="right:673.0999999999999px;top:708px;transform:scaleX(1.0245);transform-origin:right center;">2018.04.25 10:12:08</span>
<span class="t" style="right:566.2px;top:708px;">1.39470</span>
<span class="t" style="right:459.20000000000005px;top:708px;">0.00</span>
<span class="t" style="right:340.9000000000001px;top:708px;">107.28</span>
<span class="t" style="right:7.7000000000000455px;top:708px;transform:scaleX(1.0022);transform-origin:right center;">VantagePointX one: Basket# 2[tp</span>
<div style="left:13px;top:725px;width:1904px;height:20px;background:#ececec;"></div>
<div style="left:906px;top:726px;width:104px;height:18px;background:#5aeb5a;"></div>
<svg class="ic" style="left:16px;top:728px" width="15" height="16" viewBox="0 0 15 16"><path d="M1 0.500h7l3 3v10h-10z" fill="#fff" stroke="#707070"/><path d="M8 0.500v3h3" fill="#e8e8e8" stroke="#707070"/><circle cx="10.500" cy="11.300" r="3.300" fill="#f04818" stroke="#b02800" stroke-width="0.800"/><circle cx="9.700" cy="10.300" r="1" fill="#ff9868"/></svg>
<span class="t" style="left:35.3px;top:728px;transform:scaleX(0.9685);transform-origin:left center;">20449404</span>
<span class="t" style="right:1533.1px;top:728px;transform:scaleX(1.0245);transform-origin:right center;">2018.04.25 08:00:13</span>
<span class="t" style="right:1426.6px;top:728px;transform:scaleX(0.9269);transform-origin:right center;">sell</span>
<span class="t" style="right:1340px;top:728px;">0.01</span>
<span class="t" style="right:1233.2px;top:728px;transform:scaleX(0.9698);transform-origin:right center;">nzdusd</span>
<span class="t" style="right:1124.7px;top:728px;">0.70916</span>
<span class="t" style="right:1018.5px;top:728px;">0.00000</span>
<span class="t" style="right:911px;top:728px;">0.70716</span>
<span class="t" style="right:673.0999999999999px;top:728px;transform:scaleX(1.0245);transform-origin:right center;">2018.04.25 14:51:46</span>
<span class="t" style="right:566.2px;top:728px;">0.70715</span>
<span class="t" style="right:459.20000000000005px;top:728px;">0.00</span>
<span class="t" style="right:340.9000000000001px;top:728px;">2.01</span>
<span class="t" style="right:7.7000000000000455px;top:728px;">tp</span>
<div style="left:13px;top:745px;width:1904px;height:20px;background:#fff;"></div>
<div style="left:906px;top:746px;width:104px;height:18px;background:#5aeb5a;"></div>
<svg class="ic" style="left:16px;top:748px" width="15" height="16" viewBox="0 0 15 16"><path d="M1 0.500h7l3 3v10h-10z" fill="#fff" stroke="#707070"/><path d="M8 0.500v3h3" fill="#e8e8e8" stroke="#707070"/><circle cx="10.500" cy="11.300" r="3.300" fill="#f04818" stroke="#b02800" stroke-width="0.800"/><circle cx="9.700" cy="10.300" r="1" fill="#ff9868"/></svg>
<span class="t" style="left:35.3px;top:748px;transform:scaleX(0.9685);transform-origin:left center;">20460689</span>
<span class="t" style="right:1533.1px;top:748px;transform:scaleX(1.0328);transform-origin:right center;">2018.04.25 11:55:48</span>
<span class="t" style="right:1426.6px;top:748px;transform:scaleX(0.9269);transform-origin:right center;">sell</span>
<span class="t" style="right:1340px;top:748px;">0.10</span>
<span class="t" style="right:1233.2px;top:748px;transform:scaleX(0.9809);transform-origin:right center;">gbpusd</span>
<span class="t" style="right:1124.7px;top:748px;">1.39521</span>
<span class="t" style="right:1018.5px;top:748px;">0.00000</span>
<span class="t" style="right:911px;top:748px;">1.39321</span>
<span class="t" style="right:673.0999999999999px;top:748px;transform:scaleX(1.0245);transform-origin:right center;">2018.04.25 17:27:42</span>
<span class="t" style="right:566.2px;top:748px;">1.39321</span>
<span class="t" style="right:459.20000000000005px;top:748px;">0.00</span>
<span class="t" style="right:340.9000000000001px;top:748px;">20.00</span>
<span class="t" style="right:7.7000000000000455px;top:748px;transform:scaleX(1.0032);transform-origin:right center;">VantagePointX three: Basket# 0[</span>
<div style="left:13px;top:765px;width:1904px;height:20px;background:#ececec;"></div>
<div style="left:906px;top:766px;width:104px;height:18px;background:#5aeb5a;"></div>
<svg class="ic" style="left:16px;top:768px" width="15" height="16" viewBox="0 0 15 16"><path d="M1 0.500h7l3 3v10h-10z" fill="#fff" stroke="#707070"/><path d="M8 0.500v3h3" fill="#e8e8e8" stroke="#707070"/><circle cx="10.500" cy="11.300" r="3.300" fill="#f04818" stroke="#b02800" stroke-width="0.800"/><circle cx="9.700" cy="10.300" r="1" fill="#ff9868"/></svg>
<span class="t" style="left:35.3px;top:768px;transform:scaleX(0.9685);transform-origin:left center;">20460690</span>
<span class="t" style="right:1533.1px;top:768px;transform:scaleX(1.0328);transform-origin:right center;">2018.04.25 11:55:48</span>
<span class="t" style="right:1426.6px;top:768px;transform:scaleX(0.9269);transform-origin:right center;">sell</span>
<span class="t" style="right:1340px;top:768px;">0.10</span>
<span class="t" style="right:1233.2px;top:768px;transform:scaleX(0.9809);transform-origin:right center;">gbpusd</span>
<span class="t" style="right:1124.7px;top:768px;">1.39521</span>
<span class="t" style="right:1018.5px;top:768px;">0.00000</span>
<span class="t" style="right:911px;top:768px;">1.39321</span>
<span class="t" style="right:673.0999999999999px;top:768px;transform:scaleX(1.0245);transform-origin:right center;">2018.04.25 17:27:42</span>
<span class="t" style="right:566.2px;top:768px;">1.39321</span>
<span class="t" style="right:459.20000000000005px;top:768px;">0.00</span>
<span class="t" style="right:340.9000000000001px;top:768px;">20.00</span>
<span class="t" style="right:7.7000000000000455px;top:768px;transform:scaleX(1.0022);transform-origin:right center;">VantagePointX one: Basket# 0[tp</span>
<div style="left:13px;top:605px;width:1904px;height:1px;background:#c0c0c0;"></div>
<div style="left:13px;top:625px;width:1904px;height:1px;background:#c0c0c0;"></div>
<div style="left:13px;top:645px;width:1904px;height:1px;background:#c0c0c0;"></div>
<div style="left:13px;top:665px;width:1904px;height:1px;background:#c0c0c0;"></div>
<div style="left:13px;top:685px;width:1904px;height:1px;background:#c0c0c0;"></div>
<div style="left:13px;top:705px;width:1904px;height:1px;background:#c0c0c0;"></div>
<div style="left:13px;top:725px;width:1904px;height:1px;background:#c0c0c0;"></div>
<div style="left:13px;top:745px;width:1904px;height:1px;background:#c0c0c0;"></div>
<div style="left:13px;top:765px;width:1904px;height:1px;background:#c0c0c0;"></div>
<div style="left:13px;top:785px;width:1904px;height:1px;background:#c0c0c0;"></div>
<div style="left:150px;top:585px;width:1px;height:200px;background:#c0c0c0;"></div>
<div style="left:389px;top:585px;width:1px;height:200px;background:#c0c0c0;"></div>
<div style="left:496px;top:585px;width:1px;height:200px;background:#c0c0c0;"></div>
<div style="left:582px;top:585px;width:1px;height:200px;background:#c0c0c0;"></div>
<div style="left:689px;top:585px;width:1px;height:200px;background:#c0c0c0;"></div>
<div style="left:796px;top:585px;width:1px;height:200px;background:#c0c0c0;"></div>
<div style="left:903px;top:585px;width:1px;height:200px;background:#c0c0c0;"></div>
<div style="left:1010px;top:585px;width:1px;height:200px;background:#c0c0c0;"></div>
<div style="left:1249px;top:585px;width:1px;height:200px;background:#c0c0c0;"></div>
<div style="left:1356px;top:585px;width:1px;height:200px;background:#c0c0c0;"></div>
<div style="left:1463px;top:585px;width:1px;height:200px;background:#c0c0c0;"></div>
<div style="left:1581px;top:585px;width:1px;height:200px;background:#c0c0c0;"></div>
<div style="left:13px;top:785px;width:1904px;height:19px;background:#c8c8c8;"></div>
<svg class="ic" style="left:20px;top:791px" width="8" height="8" viewBox="0 0 8 8"><circle cx="4" cy="4" r="3.2" fill="#d8d8d8" stroke="#808080"/></svg>
<span class="t b" style="left:35.3px;top:788px;transform:scaleX(1.0733);transform-origin:left center;">Profit/Loss: 263.55  Credit: 0.00  Deposit: 0.00  Withdrawal: 0.00</span>
<span class="t b" style="right:340.9000000000001px;top:788px;transform:scaleX(1.1175);transform-origin:right center;">263.55</span>
</div></body></html>
